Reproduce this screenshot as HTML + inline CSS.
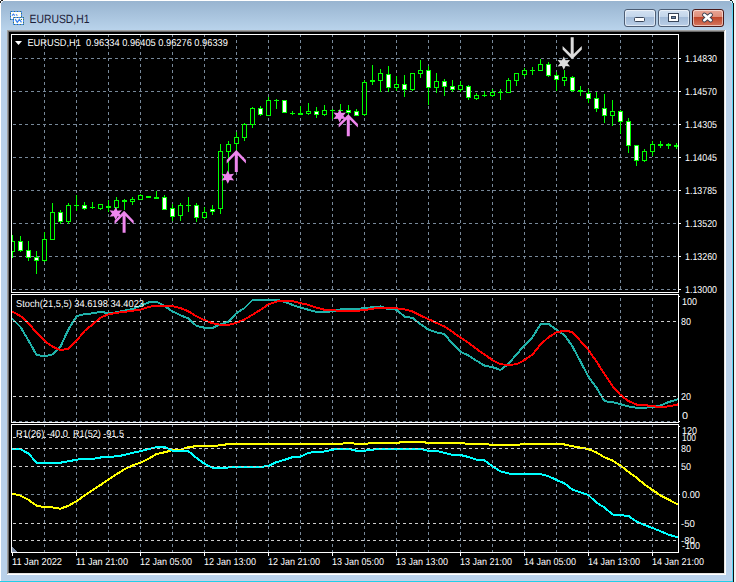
<!DOCTYPE html><html><head><meta charset="utf-8"><style>
html,body{margin:0;padding:0;width:736px;height:582px;overflow:hidden;background:#fff}
svg{position:absolute;left:0;top:0;display:block}
text{font-family:"Liberation Sans",sans-serif;text-rendering:geometricPrecision}
</style></head><body>
<svg width="736" height="582" viewBox="0 0 736 582">
<defs>
<linearGradient id="tg" x1="0" y1="0" x2="0" y2="1"><stop offset="0" stop-color="#98b4d0"/><stop offset="1" stop-color="#bad4ec"/></linearGradient>
<linearGradient id="bb" x1="0" y1="0" x2="0" y2="1"><stop offset="0" stop-color="#d4e2f2"/><stop offset="0.44" stop-color="#c2d5ea"/><stop offset="0.46" stop-color="#a2bbd8"/><stop offset="1" stop-color="#bcd0e8"/></linearGradient>
<linearGradient id="cb" x1="0" y1="0" x2="0" y2="1"><stop offset="0" stop-color="#eaa898"/><stop offset="0.44" stop-color="#de8e7a"/><stop offset="0.46" stop-color="#c0462a"/><stop offset="1" stop-color="#d67a62"/></linearGradient>
<clipPath id="cp1"><rect x="12" y="35" width="666" height="257"/></clipPath>
<clipPath id="cp2"><rect x="12" y="295" width="666" height="127"/></clipPath>
<clipPath id="cp3"><rect x="12" y="425" width="666" height="127"/></clipPath>
</defs>
<g shape-rendering="crispEdges">
<rect x="0" y="0" width="736" height="582" fill="#ffffff"/>
<rect x="1" y="1" width="732" height="581" fill="#b9d1ea"/>
<rect x="1" y="1" width="732" height="30" fill="url(#tg)"/>
<rect x="732" y="3" width="1" height="579" fill="#58d6f6"/>
<rect x="733" y="3" width="1" height="579" fill="#101010"/>
<rect x="734" y="0" width="2" height="582" fill="#f2f2f2"/>
<rect x="730" y="0" width="2" height="1" fill="#101818"/>
<rect x="732" y="1" width="1" height="2" fill="#184848"/>
<rect x="730" y="1" width="2" height="1" fill="#c8f2fa"/>
<rect x="731" y="2" width="1" height="1" fill="#c8f2fa"/>
<rect x="1" y="0" width="2" height="1" fill="#202020"/>
<rect x="0" y="1" width="1" height="2" fill="#202020"/>
<rect x="1" y="1" width="2" height="1" fill="#e4e8ee"/>
<rect x="1" y="2" width="1" height="1" fill="#e4e8ee"/>
<rect x="0" y="581" width="733" height="1" fill="#22cee8"/>
<rect x="731" y="28" width="1" height="553" fill="#c4d0ea"/>
<rect x="1" y="580" width="731" height="1" fill="#c4cfe8"/>
<rect x="7" y="30" width="719" height="545" fill="#ffffff"/>
<rect x="7" y="30" width="718" height="544" fill="#a0a0a0"/>
<rect x="8" y="31" width="717" height="543" fill="#e3e3e3"/>
<rect x="8" y="31" width="716" height="542" fill="#696969"/>
<rect x="9" y="32" width="715" height="541" fill="#000000"/>
</g>
<rect x="624.5" y="9.5" width="31" height="17" rx="2.5" ry="2.5" fill="url(#bb)" stroke="#4c5d74" stroke-width="1"/>
<rect x="625.5" y="10.5" width="29" height="15" rx="2" ry="2" fill="none" stroke="rgba(255,255,255,0.55)" stroke-width="1"/>
<rect x="658.5" y="9.5" width="31" height="17" rx="2.5" ry="2.5" fill="url(#bb)" stroke="#4c5d74" stroke-width="1"/>
<rect x="659.5" y="10.5" width="29" height="15" rx="2" ry="2" fill="none" stroke="rgba(255,255,255,0.55)" stroke-width="1"/>
<rect x="692.5" y="9.5" width="31" height="17" rx="2.5" ry="2.5" fill="url(#cb)" stroke="#4a1a1a" stroke-width="1"/>
<rect x="693.5" y="10.5" width="29" height="15" rx="2" ry="2" fill="none" stroke="rgba(255,255,255,0.55)" stroke-width="1"/>
<rect x="634.5" y="17.5" width="10" height="4" rx="1" fill="#ffffff" stroke="#39465a" stroke-width="1"/>
<rect x="668.5" y="13.5" width="10" height="8" fill="none" stroke="#39465a" stroke-width="1"/>
<rect x="670" y="15" width="7" height="5" fill="none" stroke="#ffffff" stroke-width="2"/>
<rect x="671.5" y="16.5" width="4" height="2" fill="#6b86a8" stroke="#39465a" stroke-width="1"/>
<path d="M704.3 14.8 L710.7 20.2 M710.7 14.8 L704.3 20.2" stroke="#3a4050" stroke-width="4.4" stroke-linecap="round"/>
<path d="M704.3 14.8 L710.7 20.2 M710.7 14.8 L704.3 20.2" stroke="#ffffff" stroke-width="2.6" stroke-linecap="round"/>
<g shape-rendering="crispEdges">
<rect x="10" y="11" width="12" height="9" fill="#4a8cf2"/>
<rect x="11" y="12" width="10" height="7" fill="#fffef6"/>
<rect x="13" y="17" width="11" height="8" fill="#4a8cf2"/>
<rect x="14" y="18" width="9" height="6" fill="#fffef6"/>
<path fill="#3f7a60" d="M11 11h1v1h-1zM14 11h1v1h-1zM17 11h1v1h-1zM20 11h1v1h-1zM14 17h1v1h-1z M14 24h1v1h-1zM17 17h1v1h-1z M17 24h1v1h-1zM20 17h1v1h-1z M20 24h1v1h-1zM23 17h1v1h-1z M23 24h1v1h-1zM10 13h1v1h-1z M21 13h1v1h-1zM10 16h1v1h-1z M21 16h1v1h-1zM10 19h1v1h-1z M21 19h1v1h-1zM13 19h1v1h-1z M23 19h1v1h-1zM13 22h1v1h-1z M23 22h1v1h-1z"/>
</g>
<path d="M15.2 19.2 L17.3 22.4 L19.4 19.3 L21.5 22.4" fill="none" stroke="#3c82f0" stroke-width="1.2"/>
<path d="M12 15.6 L13.4 14.2 L14.8 15.6 M16 14.4 L17.4 15.6" fill="none" stroke="#3c82f0" stroke-width="1.2"/>
<text x="29.5" y="22.8" font-size="12" fill="#1c2038" textLength="60" lengthAdjust="spacingAndGlyphs">EURUSD,H1</text>
<g shape-rendering="crispEdges" fill="#ffffff">
<rect x="11" y="34" width="668" height="1"/>
<rect x="11" y="292" width="668" height="1"/>
<rect x="11" y="34" width="1" height="259"/>
<rect x="678" y="34" width="1" height="259"/>
<rect x="11" y="294" width="668" height="1"/>
<rect x="11" y="422" width="668" height="1"/>
<rect x="11" y="294" width="1" height="129"/>
<rect x="678" y="294" width="1" height="129"/>
<rect x="11" y="424" width="668" height="1"/>
<rect x="11" y="552" width="668" height="1"/>
<rect x="11" y="424" width="1" height="129"/>
<rect x="678" y="424" width="1" height="129"/>
</g>
<path shape-rendering="crispEdges" fill="#778899" d="M13 58h3v1h-3zM19 58h3v1h-3zM25 58h3v1h-3zM31 58h3v1h-3zM37 58h3v1h-3zM43 58h3v1h-3zM49 58h3v1h-3zM55 58h3v1h-3zM61 58h3v1h-3zM67 58h3v1h-3zM73 58h3v1h-3zM79 58h3v1h-3zM85 58h3v1h-3zM91 58h3v1h-3zM97 58h3v1h-3zM103 58h3v1h-3zM109 58h3v1h-3zM115 58h3v1h-3zM121 58h3v1h-3zM127 58h3v1h-3zM133 58h3v1h-3zM139 58h3v1h-3zM145 58h3v1h-3zM151 58h3v1h-3zM157 58h3v1h-3zM163 58h3v1h-3zM169 58h3v1h-3zM175 58h3v1h-3zM181 58h3v1h-3zM187 58h3v1h-3zM193 58h3v1h-3zM199 58h3v1h-3zM205 58h3v1h-3zM211 58h3v1h-3zM217 58h3v1h-3zM223 58h3v1h-3zM229 58h3v1h-3zM235 58h3v1h-3zM241 58h3v1h-3zM247 58h3v1h-3zM253 58h3v1h-3zM259 58h3v1h-3zM265 58h3v1h-3zM271 58h3v1h-3zM277 58h3v1h-3zM283 58h3v1h-3zM289 58h3v1h-3zM295 58h3v1h-3zM301 58h3v1h-3zM307 58h3v1h-3zM313 58h3v1h-3zM319 58h3v1h-3zM325 58h3v1h-3zM331 58h3v1h-3zM337 58h3v1h-3zM343 58h3v1h-3zM349 58h3v1h-3zM355 58h3v1h-3zM361 58h3v1h-3zM367 58h3v1h-3zM373 58h3v1h-3zM379 58h3v1h-3zM385 58h3v1h-3zM391 58h3v1h-3zM397 58h3v1h-3zM403 58h3v1h-3zM409 58h3v1h-3zM415 58h3v1h-3zM421 58h3v1h-3zM427 58h3v1h-3zM433 58h3v1h-3zM439 58h3v1h-3zM445 58h3v1h-3zM451 58h3v1h-3zM457 58h3v1h-3zM463 58h3v1h-3zM469 58h3v1h-3zM475 58h3v1h-3zM481 58h3v1h-3zM487 58h3v1h-3zM493 58h3v1h-3zM499 58h3v1h-3zM505 58h3v1h-3zM511 58h3v1h-3zM517 58h3v1h-3zM523 58h3v1h-3zM529 58h3v1h-3zM535 58h3v1h-3zM541 58h3v1h-3zM547 58h3v1h-3zM553 58h3v1h-3zM559 58h3v1h-3zM565 58h3v1h-3zM571 58h3v1h-3zM577 58h3v1h-3zM583 58h3v1h-3zM589 58h3v1h-3zM595 58h3v1h-3zM601 58h3v1h-3zM607 58h3v1h-3zM613 58h3v1h-3zM619 58h3v1h-3zM625 58h3v1h-3zM631 58h3v1h-3zM637 58h3v1h-3zM643 58h3v1h-3zM649 58h3v1h-3zM655 58h3v1h-3zM661 58h3v1h-3zM667 58h3v1h-3zM673 58h3v1h-3zM13 91h3v1h-3zM19 91h3v1h-3zM25 91h3v1h-3zM31 91h3v1h-3zM37 91h3v1h-3zM43 91h3v1h-3zM49 91h3v1h-3zM55 91h3v1h-3zM61 91h3v1h-3zM67 91h3v1h-3zM73 91h3v1h-3zM79 91h3v1h-3zM85 91h3v1h-3zM91 91h3v1h-3zM97 91h3v1h-3zM103 91h3v1h-3zM109 91h3v1h-3zM115 91h3v1h-3zM121 91h3v1h-3zM127 91h3v1h-3zM133 91h3v1h-3zM139 91h3v1h-3zM145 91h3v1h-3zM151 91h3v1h-3zM157 91h3v1h-3zM163 91h3v1h-3zM169 91h3v1h-3zM175 91h3v1h-3zM181 91h3v1h-3zM187 91h3v1h-3zM193 91h3v1h-3zM199 91h3v1h-3zM205 91h3v1h-3zM211 91h3v1h-3zM217 91h3v1h-3zM223 91h3v1h-3zM229 91h3v1h-3zM235 91h3v1h-3zM241 91h3v1h-3zM247 91h3v1h-3zM253 91h3v1h-3zM259 91h3v1h-3zM265 91h3v1h-3zM271 91h3v1h-3zM277 91h3v1h-3zM283 91h3v1h-3zM289 91h3v1h-3zM295 91h3v1h-3zM301 91h3v1h-3zM307 91h3v1h-3zM313 91h3v1h-3zM319 91h3v1h-3zM325 91h3v1h-3zM331 91h3v1h-3zM337 91h3v1h-3zM343 91h3v1h-3zM349 91h3v1h-3zM355 91h3v1h-3zM361 91h3v1h-3zM367 91h3v1h-3zM373 91h3v1h-3zM379 91h3v1h-3zM385 91h3v1h-3zM391 91h3v1h-3zM397 91h3v1h-3zM403 91h3v1h-3zM409 91h3v1h-3zM415 91h3v1h-3zM421 91h3v1h-3zM427 91h3v1h-3zM433 91h3v1h-3zM439 91h3v1h-3zM445 91h3v1h-3zM451 91h3v1h-3zM457 91h3v1h-3zM463 91h3v1h-3zM469 91h3v1h-3zM475 91h3v1h-3zM481 91h3v1h-3zM487 91h3v1h-3zM493 91h3v1h-3zM499 91h3v1h-3zM505 91h3v1h-3zM511 91h3v1h-3zM517 91h3v1h-3zM523 91h3v1h-3zM529 91h3v1h-3zM535 91h3v1h-3zM541 91h3v1h-3zM547 91h3v1h-3zM553 91h3v1h-3zM559 91h3v1h-3zM565 91h3v1h-3zM571 91h3v1h-3zM577 91h3v1h-3zM583 91h3v1h-3zM589 91h3v1h-3zM595 91h3v1h-3zM601 91h3v1h-3zM607 91h3v1h-3zM613 91h3v1h-3zM619 91h3v1h-3zM625 91h3v1h-3zM631 91h3v1h-3zM637 91h3v1h-3zM643 91h3v1h-3zM649 91h3v1h-3zM655 91h3v1h-3zM661 91h3v1h-3zM667 91h3v1h-3zM673 91h3v1h-3zM13 124h3v1h-3zM19 124h3v1h-3zM25 124h3v1h-3zM31 124h3v1h-3zM37 124h3v1h-3zM43 124h3v1h-3zM49 124h3v1h-3zM55 124h3v1h-3zM61 124h3v1h-3zM67 124h3v1h-3zM73 124h3v1h-3zM79 124h3v1h-3zM85 124h3v1h-3zM91 124h3v1h-3zM97 124h3v1h-3zM103 124h3v1h-3zM109 124h3v1h-3zM115 124h3v1h-3zM121 124h3v1h-3zM127 124h3v1h-3zM133 124h3v1h-3zM139 124h3v1h-3zM145 124h3v1h-3zM151 124h3v1h-3zM157 124h3v1h-3zM163 124h3v1h-3zM169 124h3v1h-3zM175 124h3v1h-3zM181 124h3v1h-3zM187 124h3v1h-3zM193 124h3v1h-3zM199 124h3v1h-3zM205 124h3v1h-3zM211 124h3v1h-3zM217 124h3v1h-3zM223 124h3v1h-3zM229 124h3v1h-3zM235 124h3v1h-3zM241 124h3v1h-3zM247 124h3v1h-3zM253 124h3v1h-3zM259 124h3v1h-3zM265 124h3v1h-3zM271 124h3v1h-3zM277 124h3v1h-3zM283 124h3v1h-3zM289 124h3v1h-3zM295 124h3v1h-3zM301 124h3v1h-3zM307 124h3v1h-3zM313 124h3v1h-3zM319 124h3v1h-3zM325 124h3v1h-3zM331 124h3v1h-3zM337 124h3v1h-3zM343 124h3v1h-3zM349 124h3v1h-3zM355 124h3v1h-3zM361 124h3v1h-3zM367 124h3v1h-3zM373 124h3v1h-3zM379 124h3v1h-3zM385 124h3v1h-3zM391 124h3v1h-3zM397 124h3v1h-3zM403 124h3v1h-3zM409 124h3v1h-3zM415 124h3v1h-3zM421 124h3v1h-3zM427 124h3v1h-3zM433 124h3v1h-3zM439 124h3v1h-3zM445 124h3v1h-3zM451 124h3v1h-3zM457 124h3v1h-3zM463 124h3v1h-3zM469 124h3v1h-3zM475 124h3v1h-3zM481 124h3v1h-3zM487 124h3v1h-3zM493 124h3v1h-3zM499 124h3v1h-3zM505 124h3v1h-3zM511 124h3v1h-3zM517 124h3v1h-3zM523 124h3v1h-3zM529 124h3v1h-3zM535 124h3v1h-3zM541 124h3v1h-3zM547 124h3v1h-3zM553 124h3v1h-3zM559 124h3v1h-3zM565 124h3v1h-3zM571 124h3v1h-3zM577 124h3v1h-3zM583 124h3v1h-3zM589 124h3v1h-3zM595 124h3v1h-3zM601 124h3v1h-3zM607 124h3v1h-3zM613 124h3v1h-3zM619 124h3v1h-3zM625 124h3v1h-3zM631 124h3v1h-3zM637 124h3v1h-3zM643 124h3v1h-3zM649 124h3v1h-3zM655 124h3v1h-3zM661 124h3v1h-3zM667 124h3v1h-3zM673 124h3v1h-3zM13 157h3v1h-3zM19 157h3v1h-3zM25 157h3v1h-3zM31 157h3v1h-3zM37 157h3v1h-3zM43 157h3v1h-3zM49 157h3v1h-3zM55 157h3v1h-3zM61 157h3v1h-3zM67 157h3v1h-3zM73 157h3v1h-3zM79 157h3v1h-3zM85 157h3v1h-3zM91 157h3v1h-3zM97 157h3v1h-3zM103 157h3v1h-3zM109 157h3v1h-3zM115 157h3v1h-3zM121 157h3v1h-3zM127 157h3v1h-3zM133 157h3v1h-3zM139 157h3v1h-3zM145 157h3v1h-3zM151 157h3v1h-3zM157 157h3v1h-3zM163 157h3v1h-3zM169 157h3v1h-3zM175 157h3v1h-3zM181 157h3v1h-3zM187 157h3v1h-3zM193 157h3v1h-3zM199 157h3v1h-3zM205 157h3v1h-3zM211 157h3v1h-3zM217 157h3v1h-3zM223 157h3v1h-3zM229 157h3v1h-3zM235 157h3v1h-3zM241 157h3v1h-3zM247 157h3v1h-3zM253 157h3v1h-3zM259 157h3v1h-3zM265 157h3v1h-3zM271 157h3v1h-3zM277 157h3v1h-3zM283 157h3v1h-3zM289 157h3v1h-3zM295 157h3v1h-3zM301 157h3v1h-3zM307 157h3v1h-3zM313 157h3v1h-3zM319 157h3v1h-3zM325 157h3v1h-3zM331 157h3v1h-3zM337 157h3v1h-3zM343 157h3v1h-3zM349 157h3v1h-3zM355 157h3v1h-3zM361 157h3v1h-3zM367 157h3v1h-3zM373 157h3v1h-3zM379 157h3v1h-3zM385 157h3v1h-3zM391 157h3v1h-3zM397 157h3v1h-3zM403 157h3v1h-3zM409 157h3v1h-3zM415 157h3v1h-3zM421 157h3v1h-3zM427 157h3v1h-3zM433 157h3v1h-3zM439 157h3v1h-3zM445 157h3v1h-3zM451 157h3v1h-3zM457 157h3v1h-3zM463 157h3v1h-3zM469 157h3v1h-3zM475 157h3v1h-3zM481 157h3v1h-3zM487 157h3v1h-3zM493 157h3v1h-3zM499 157h3v1h-3zM505 157h3v1h-3zM511 157h3v1h-3zM517 157h3v1h-3zM523 157h3v1h-3zM529 157h3v1h-3zM535 157h3v1h-3zM541 157h3v1h-3zM547 157h3v1h-3zM553 157h3v1h-3zM559 157h3v1h-3zM565 157h3v1h-3zM571 157h3v1h-3zM577 157h3v1h-3zM583 157h3v1h-3zM589 157h3v1h-3zM595 157h3v1h-3zM601 157h3v1h-3zM607 157h3v1h-3zM613 157h3v1h-3zM619 157h3v1h-3zM625 157h3v1h-3zM631 157h3v1h-3zM637 157h3v1h-3zM643 157h3v1h-3zM649 157h3v1h-3zM655 157h3v1h-3zM661 157h3v1h-3zM667 157h3v1h-3zM673 157h3v1h-3zM13 190h3v1h-3zM19 190h3v1h-3zM25 190h3v1h-3zM31 190h3v1h-3zM37 190h3v1h-3zM43 190h3v1h-3zM49 190h3v1h-3zM55 190h3v1h-3zM61 190h3v1h-3zM67 190h3v1h-3zM73 190h3v1h-3zM79 190h3v1h-3zM85 190h3v1h-3zM91 190h3v1h-3zM97 190h3v1h-3zM103 190h3v1h-3zM109 190h3v1h-3zM115 190h3v1h-3zM121 190h3v1h-3zM127 190h3v1h-3zM133 190h3v1h-3zM139 190h3v1h-3zM145 190h3v1h-3zM151 190h3v1h-3zM157 190h3v1h-3zM163 190h3v1h-3zM169 190h3v1h-3zM175 190h3v1h-3zM181 190h3v1h-3zM187 190h3v1h-3zM193 190h3v1h-3zM199 190h3v1h-3zM205 190h3v1h-3zM211 190h3v1h-3zM217 190h3v1h-3zM223 190h3v1h-3zM229 190h3v1h-3zM235 190h3v1h-3zM241 190h3v1h-3zM247 190h3v1h-3zM253 190h3v1h-3zM259 190h3v1h-3zM265 190h3v1h-3zM271 190h3v1h-3zM277 190h3v1h-3zM283 190h3v1h-3zM289 190h3v1h-3zM295 190h3v1h-3zM301 190h3v1h-3zM307 190h3v1h-3zM313 190h3v1h-3zM319 190h3v1h-3zM325 190h3v1h-3zM331 190h3v1h-3zM337 190h3v1h-3zM343 190h3v1h-3zM349 190h3v1h-3zM355 190h3v1h-3zM361 190h3v1h-3zM367 190h3v1h-3zM373 190h3v1h-3zM379 190h3v1h-3zM385 190h3v1h-3zM391 190h3v1h-3zM397 190h3v1h-3zM403 190h3v1h-3zM409 190h3v1h-3zM415 190h3v1h-3zM421 190h3v1h-3zM427 190h3v1h-3zM433 190h3v1h-3zM439 190h3v1h-3zM445 190h3v1h-3zM451 190h3v1h-3zM457 190h3v1h-3zM463 190h3v1h-3zM469 190h3v1h-3zM475 190h3v1h-3zM481 190h3v1h-3zM487 190h3v1h-3zM493 190h3v1h-3zM499 190h3v1h-3zM505 190h3v1h-3zM511 190h3v1h-3zM517 190h3v1h-3zM523 190h3v1h-3zM529 190h3v1h-3zM535 190h3v1h-3zM541 190h3v1h-3zM547 190h3v1h-3zM553 190h3v1h-3zM559 190h3v1h-3zM565 190h3v1h-3zM571 190h3v1h-3zM577 190h3v1h-3zM583 190h3v1h-3zM589 190h3v1h-3zM595 190h3v1h-3zM601 190h3v1h-3zM607 190h3v1h-3zM613 190h3v1h-3zM619 190h3v1h-3zM625 190h3v1h-3zM631 190h3v1h-3zM637 190h3v1h-3zM643 190h3v1h-3zM649 190h3v1h-3zM655 190h3v1h-3zM661 190h3v1h-3zM667 190h3v1h-3zM673 190h3v1h-3zM13 223h3v1h-3zM19 223h3v1h-3zM25 223h3v1h-3zM31 223h3v1h-3zM37 223h3v1h-3zM43 223h3v1h-3zM49 223h3v1h-3zM55 223h3v1h-3zM61 223h3v1h-3zM67 223h3v1h-3zM73 223h3v1h-3zM79 223h3v1h-3zM85 223h3v1h-3zM91 223h3v1h-3zM97 223h3v1h-3zM103 223h3v1h-3zM109 223h3v1h-3zM115 223h3v1h-3zM121 223h3v1h-3zM127 223h3v1h-3zM133 223h3v1h-3zM139 223h3v1h-3zM145 223h3v1h-3zM151 223h3v1h-3zM157 223h3v1h-3zM163 223h3v1h-3zM169 223h3v1h-3zM175 223h3v1h-3zM181 223h3v1h-3zM187 223h3v1h-3zM193 223h3v1h-3zM199 223h3v1h-3zM205 223h3v1h-3zM211 223h3v1h-3zM217 223h3v1h-3zM223 223h3v1h-3zM229 223h3v1h-3zM235 223h3v1h-3zM241 223h3v1h-3zM247 223h3v1h-3zM253 223h3v1h-3zM259 223h3v1h-3zM265 223h3v1h-3zM271 223h3v1h-3zM277 223h3v1h-3zM283 223h3v1h-3zM289 223h3v1h-3zM295 223h3v1h-3zM301 223h3v1h-3zM307 223h3v1h-3zM313 223h3v1h-3zM319 223h3v1h-3zM325 223h3v1h-3zM331 223h3v1h-3zM337 223h3v1h-3zM343 223h3v1h-3zM349 223h3v1h-3zM355 223h3v1h-3zM361 223h3v1h-3zM367 223h3v1h-3zM373 223h3v1h-3zM379 223h3v1h-3zM385 223h3v1h-3zM391 223h3v1h-3zM397 223h3v1h-3zM403 223h3v1h-3zM409 223h3v1h-3zM415 223h3v1h-3zM421 223h3v1h-3zM427 223h3v1h-3zM433 223h3v1h-3zM439 223h3v1h-3zM445 223h3v1h-3zM451 223h3v1h-3zM457 223h3v1h-3zM463 223h3v1h-3zM469 223h3v1h-3zM475 223h3v1h-3zM481 223h3v1h-3zM487 223h3v1h-3zM493 223h3v1h-3zM499 223h3v1h-3zM505 223h3v1h-3zM511 223h3v1h-3zM517 223h3v1h-3zM523 223h3v1h-3zM529 223h3v1h-3zM535 223h3v1h-3zM541 223h3v1h-3zM547 223h3v1h-3zM553 223h3v1h-3zM559 223h3v1h-3zM565 223h3v1h-3zM571 223h3v1h-3zM577 223h3v1h-3zM583 223h3v1h-3zM589 223h3v1h-3zM595 223h3v1h-3zM601 223h3v1h-3zM607 223h3v1h-3zM613 223h3v1h-3zM619 223h3v1h-3zM625 223h3v1h-3zM631 223h3v1h-3zM637 223h3v1h-3zM643 223h3v1h-3zM649 223h3v1h-3zM655 223h3v1h-3zM661 223h3v1h-3zM667 223h3v1h-3zM673 223h3v1h-3zM13 256h3v1h-3zM19 256h3v1h-3zM25 256h3v1h-3zM31 256h3v1h-3zM37 256h3v1h-3zM43 256h3v1h-3zM49 256h3v1h-3zM55 256h3v1h-3zM61 256h3v1h-3zM67 256h3v1h-3zM73 256h3v1h-3zM79 256h3v1h-3zM85 256h3v1h-3zM91 256h3v1h-3zM97 256h3v1h-3zM103 256h3v1h-3zM109 256h3v1h-3zM115 256h3v1h-3zM121 256h3v1h-3zM127 256h3v1h-3zM133 256h3v1h-3zM139 256h3v1h-3zM145 256h3v1h-3zM151 256h3v1h-3zM157 256h3v1h-3zM163 256h3v1h-3zM169 256h3v1h-3zM175 256h3v1h-3zM181 256h3v1h-3zM187 256h3v1h-3zM193 256h3v1h-3zM199 256h3v1h-3zM205 256h3v1h-3zM211 256h3v1h-3zM217 256h3v1h-3zM223 256h3v1h-3zM229 256h3v1h-3zM235 256h3v1h-3zM241 256h3v1h-3zM247 256h3v1h-3zM253 256h3v1h-3zM259 256h3v1h-3zM265 256h3v1h-3zM271 256h3v1h-3zM277 256h3v1h-3zM283 256h3v1h-3zM289 256h3v1h-3zM295 256h3v1h-3zM301 256h3v1h-3zM307 256h3v1h-3zM313 256h3v1h-3zM319 256h3v1h-3zM325 256h3v1h-3zM331 256h3v1h-3zM337 256h3v1h-3zM343 256h3v1h-3zM349 256h3v1h-3zM355 256h3v1h-3zM361 256h3v1h-3zM367 256h3v1h-3zM373 256h3v1h-3zM379 256h3v1h-3zM385 256h3v1h-3zM391 256h3v1h-3zM397 256h3v1h-3zM403 256h3v1h-3zM409 256h3v1h-3zM415 256h3v1h-3zM421 256h3v1h-3zM427 256h3v1h-3zM433 256h3v1h-3zM439 256h3v1h-3zM445 256h3v1h-3zM451 256h3v1h-3zM457 256h3v1h-3zM463 256h3v1h-3zM469 256h3v1h-3zM475 256h3v1h-3zM481 256h3v1h-3zM487 256h3v1h-3zM493 256h3v1h-3zM499 256h3v1h-3zM505 256h3v1h-3zM511 256h3v1h-3zM517 256h3v1h-3zM523 256h3v1h-3zM529 256h3v1h-3zM535 256h3v1h-3zM541 256h3v1h-3zM547 256h3v1h-3zM553 256h3v1h-3zM559 256h3v1h-3zM565 256h3v1h-3zM571 256h3v1h-3zM577 256h3v1h-3zM583 256h3v1h-3zM589 256h3v1h-3zM595 256h3v1h-3zM601 256h3v1h-3zM607 256h3v1h-3zM613 256h3v1h-3zM619 256h3v1h-3zM625 256h3v1h-3zM631 256h3v1h-3zM637 256h3v1h-3zM643 256h3v1h-3zM649 256h3v1h-3zM655 256h3v1h-3zM661 256h3v1h-3zM667 256h3v1h-3zM673 256h3v1h-3zM13 289h3v1h-3zM19 289h3v1h-3zM25 289h3v1h-3zM31 289h3v1h-3zM37 289h3v1h-3zM43 289h3v1h-3zM49 289h3v1h-3zM55 289h3v1h-3zM61 289h3v1h-3zM67 289h3v1h-3zM73 289h3v1h-3zM79 289h3v1h-3zM85 289h3v1h-3zM91 289h3v1h-3zM97 289h3v1h-3zM103 289h3v1h-3zM109 289h3v1h-3zM115 289h3v1h-3zM121 289h3v1h-3zM127 289h3v1h-3zM133 289h3v1h-3zM139 289h3v1h-3zM145 289h3v1h-3zM151 289h3v1h-3zM157 289h3v1h-3zM163 289h3v1h-3zM169 289h3v1h-3zM175 289h3v1h-3zM181 289h3v1h-3zM187 289h3v1h-3zM193 289h3v1h-3zM199 289h3v1h-3zM205 289h3v1h-3zM211 289h3v1h-3zM217 289h3v1h-3zM223 289h3v1h-3zM229 289h3v1h-3zM235 289h3v1h-3zM241 289h3v1h-3zM247 289h3v1h-3zM253 289h3v1h-3zM259 289h3v1h-3zM265 289h3v1h-3zM271 289h3v1h-3zM277 289h3v1h-3zM283 289h3v1h-3zM289 289h3v1h-3zM295 289h3v1h-3zM301 289h3v1h-3zM307 289h3v1h-3zM313 289h3v1h-3zM319 289h3v1h-3zM325 289h3v1h-3zM331 289h3v1h-3zM337 289h3v1h-3zM343 289h3v1h-3zM349 289h3v1h-3zM355 289h3v1h-3zM361 289h3v1h-3zM367 289h3v1h-3zM373 289h3v1h-3zM379 289h3v1h-3zM385 289h3v1h-3zM391 289h3v1h-3zM397 289h3v1h-3zM403 289h3v1h-3zM409 289h3v1h-3zM415 289h3v1h-3zM421 289h3v1h-3zM427 289h3v1h-3zM433 289h3v1h-3zM439 289h3v1h-3zM445 289h3v1h-3zM451 289h3v1h-3zM457 289h3v1h-3zM463 289h3v1h-3zM469 289h3v1h-3zM475 289h3v1h-3zM481 289h3v1h-3zM487 289h3v1h-3zM493 289h3v1h-3zM499 289h3v1h-3zM505 289h3v1h-3zM511 289h3v1h-3zM517 289h3v1h-3zM523 289h3v1h-3zM529 289h3v1h-3zM535 289h3v1h-3zM541 289h3v1h-3zM547 289h3v1h-3zM553 289h3v1h-3zM559 289h3v1h-3zM565 289h3v1h-3zM571 289h3v1h-3zM577 289h3v1h-3zM583 289h3v1h-3zM589 289h3v1h-3zM595 289h3v1h-3zM601 289h3v1h-3zM607 289h3v1h-3zM613 289h3v1h-3zM619 289h3v1h-3zM625 289h3v1h-3zM631 289h3v1h-3zM637 289h3v1h-3zM643 289h3v1h-3zM649 289h3v1h-3zM655 289h3v1h-3zM661 289h3v1h-3zM667 289h3v1h-3zM673 289h3v1h-3zM44 40h1v3h-1zM44 46h1v3h-1zM44 52h1v3h-1zM44 58h1v3h-1zM44 64h1v3h-1zM44 70h1v3h-1zM44 76h1v3h-1zM44 82h1v3h-1zM44 88h1v3h-1zM44 94h1v3h-1zM44 100h1v3h-1zM44 106h1v3h-1zM44 112h1v3h-1zM44 118h1v3h-1zM44 124h1v3h-1zM44 130h1v3h-1zM44 136h1v3h-1zM44 142h1v3h-1zM44 148h1v3h-1zM44 154h1v3h-1zM44 160h1v3h-1zM44 166h1v3h-1zM44 172h1v3h-1zM44 178h1v3h-1zM44 184h1v3h-1zM44 190h1v3h-1zM44 196h1v3h-1zM44 202h1v3h-1zM44 208h1v3h-1zM44 214h1v3h-1zM44 220h1v3h-1zM44 226h1v3h-1zM44 232h1v3h-1zM44 238h1v3h-1zM44 244h1v3h-1zM44 250h1v3h-1zM44 256h1v3h-1zM44 262h1v3h-1zM44 268h1v3h-1zM44 274h1v3h-1zM44 280h1v3h-1zM44 286h1v3h-1zM44 35h1v2h-1zM76 40h1v3h-1zM76 46h1v3h-1zM76 52h1v3h-1zM76 58h1v3h-1zM76 64h1v3h-1zM76 70h1v3h-1zM76 76h1v3h-1zM76 82h1v3h-1zM76 88h1v3h-1zM76 94h1v3h-1zM76 100h1v3h-1zM76 106h1v3h-1zM76 112h1v3h-1zM76 118h1v3h-1zM76 124h1v3h-1zM76 130h1v3h-1zM76 136h1v3h-1zM76 142h1v3h-1zM76 148h1v3h-1zM76 154h1v3h-1zM76 160h1v3h-1zM76 166h1v3h-1zM76 172h1v3h-1zM76 178h1v3h-1zM76 184h1v3h-1zM76 190h1v3h-1zM76 196h1v3h-1zM76 202h1v3h-1zM76 208h1v3h-1zM76 214h1v3h-1zM76 220h1v3h-1zM76 226h1v3h-1zM76 232h1v3h-1zM76 238h1v3h-1zM76 244h1v3h-1zM76 250h1v3h-1zM76 256h1v3h-1zM76 262h1v3h-1zM76 268h1v3h-1zM76 274h1v3h-1zM76 280h1v3h-1zM76 286h1v3h-1zM76 35h1v2h-1zM108 40h1v3h-1zM108 46h1v3h-1zM108 52h1v3h-1zM108 58h1v3h-1zM108 64h1v3h-1zM108 70h1v3h-1zM108 76h1v3h-1zM108 82h1v3h-1zM108 88h1v3h-1zM108 94h1v3h-1zM108 100h1v3h-1zM108 106h1v3h-1zM108 112h1v3h-1zM108 118h1v3h-1zM108 124h1v3h-1zM108 130h1v3h-1zM108 136h1v3h-1zM108 142h1v3h-1zM108 148h1v3h-1zM108 154h1v3h-1zM108 160h1v3h-1zM108 166h1v3h-1zM108 172h1v3h-1zM108 178h1v3h-1zM108 184h1v3h-1zM108 190h1v3h-1zM108 196h1v3h-1zM108 202h1v3h-1zM108 208h1v3h-1zM108 214h1v3h-1zM108 220h1v3h-1zM108 226h1v3h-1zM108 232h1v3h-1zM108 238h1v3h-1zM108 244h1v3h-1zM108 250h1v3h-1zM108 256h1v3h-1zM108 262h1v3h-1zM108 268h1v3h-1zM108 274h1v3h-1zM108 280h1v3h-1zM108 286h1v3h-1zM108 35h1v2h-1zM140 40h1v3h-1zM140 46h1v3h-1zM140 52h1v3h-1zM140 58h1v3h-1zM140 64h1v3h-1zM140 70h1v3h-1zM140 76h1v3h-1zM140 82h1v3h-1zM140 88h1v3h-1zM140 94h1v3h-1zM140 100h1v3h-1zM140 106h1v3h-1zM140 112h1v3h-1zM140 118h1v3h-1zM140 124h1v3h-1zM140 130h1v3h-1zM140 136h1v3h-1zM140 142h1v3h-1zM140 148h1v3h-1zM140 154h1v3h-1zM140 160h1v3h-1zM140 166h1v3h-1zM140 172h1v3h-1zM140 178h1v3h-1zM140 184h1v3h-1zM140 190h1v3h-1zM140 196h1v3h-1zM140 202h1v3h-1zM140 208h1v3h-1zM140 214h1v3h-1zM140 220h1v3h-1zM140 226h1v3h-1zM140 232h1v3h-1zM140 238h1v3h-1zM140 244h1v3h-1zM140 250h1v3h-1zM140 256h1v3h-1zM140 262h1v3h-1zM140 268h1v3h-1zM140 274h1v3h-1zM140 280h1v3h-1zM140 286h1v3h-1zM140 35h1v2h-1zM172 40h1v3h-1zM172 46h1v3h-1zM172 52h1v3h-1zM172 58h1v3h-1zM172 64h1v3h-1zM172 70h1v3h-1zM172 76h1v3h-1zM172 82h1v3h-1zM172 88h1v3h-1zM172 94h1v3h-1zM172 100h1v3h-1zM172 106h1v3h-1zM172 112h1v3h-1zM172 118h1v3h-1zM172 124h1v3h-1zM172 130h1v3h-1zM172 136h1v3h-1zM172 142h1v3h-1zM172 148h1v3h-1zM172 154h1v3h-1zM172 160h1v3h-1zM172 166h1v3h-1zM172 172h1v3h-1zM172 178h1v3h-1zM172 184h1v3h-1zM172 190h1v3h-1zM172 196h1v3h-1zM172 202h1v3h-1zM172 208h1v3h-1zM172 214h1v3h-1zM172 220h1v3h-1zM172 226h1v3h-1zM172 232h1v3h-1zM172 238h1v3h-1zM172 244h1v3h-1zM172 250h1v3h-1zM172 256h1v3h-1zM172 262h1v3h-1zM172 268h1v3h-1zM172 274h1v3h-1zM172 280h1v3h-1zM172 286h1v3h-1zM172 35h1v2h-1zM204 40h1v3h-1zM204 46h1v3h-1zM204 52h1v3h-1zM204 58h1v3h-1zM204 64h1v3h-1zM204 70h1v3h-1zM204 76h1v3h-1zM204 82h1v3h-1zM204 88h1v3h-1zM204 94h1v3h-1zM204 100h1v3h-1zM204 106h1v3h-1zM204 112h1v3h-1zM204 118h1v3h-1zM204 124h1v3h-1zM204 130h1v3h-1zM204 136h1v3h-1zM204 142h1v3h-1zM204 148h1v3h-1zM204 154h1v3h-1zM204 160h1v3h-1zM204 166h1v3h-1zM204 172h1v3h-1zM204 178h1v3h-1zM204 184h1v3h-1zM204 190h1v3h-1zM204 196h1v3h-1zM204 202h1v3h-1zM204 208h1v3h-1zM204 214h1v3h-1zM204 220h1v3h-1zM204 226h1v3h-1zM204 232h1v3h-1zM204 238h1v3h-1zM204 244h1v3h-1zM204 250h1v3h-1zM204 256h1v3h-1zM204 262h1v3h-1zM204 268h1v3h-1zM204 274h1v3h-1zM204 280h1v3h-1zM204 286h1v3h-1zM204 35h1v2h-1zM236 40h1v3h-1zM236 46h1v3h-1zM236 52h1v3h-1zM236 58h1v3h-1zM236 64h1v3h-1zM236 70h1v3h-1zM236 76h1v3h-1zM236 82h1v3h-1zM236 88h1v3h-1zM236 94h1v3h-1zM236 100h1v3h-1zM236 106h1v3h-1zM236 112h1v3h-1zM236 118h1v3h-1zM236 124h1v3h-1zM236 130h1v3h-1zM236 136h1v3h-1zM236 142h1v3h-1zM236 148h1v3h-1zM236 154h1v3h-1zM236 160h1v3h-1zM236 166h1v3h-1zM236 172h1v3h-1zM236 178h1v3h-1zM236 184h1v3h-1zM236 190h1v3h-1zM236 196h1v3h-1zM236 202h1v3h-1zM236 208h1v3h-1zM236 214h1v3h-1zM236 220h1v3h-1zM236 226h1v3h-1zM236 232h1v3h-1zM236 238h1v3h-1zM236 244h1v3h-1zM236 250h1v3h-1zM236 256h1v3h-1zM236 262h1v3h-1zM236 268h1v3h-1zM236 274h1v3h-1zM236 280h1v3h-1zM236 286h1v3h-1zM236 35h1v2h-1zM268 40h1v3h-1zM268 46h1v3h-1zM268 52h1v3h-1zM268 58h1v3h-1zM268 64h1v3h-1zM268 70h1v3h-1zM268 76h1v3h-1zM268 82h1v3h-1zM268 88h1v3h-1zM268 94h1v3h-1zM268 100h1v3h-1zM268 106h1v3h-1zM268 112h1v3h-1zM268 118h1v3h-1zM268 124h1v3h-1zM268 130h1v3h-1zM268 136h1v3h-1zM268 142h1v3h-1zM268 148h1v3h-1zM268 154h1v3h-1zM268 160h1v3h-1zM268 166h1v3h-1zM268 172h1v3h-1zM268 178h1v3h-1zM268 184h1v3h-1zM268 190h1v3h-1zM268 196h1v3h-1zM268 202h1v3h-1zM268 208h1v3h-1zM268 214h1v3h-1zM268 220h1v3h-1zM268 226h1v3h-1zM268 232h1v3h-1zM268 238h1v3h-1zM268 244h1v3h-1zM268 250h1v3h-1zM268 256h1v3h-1zM268 262h1v3h-1zM268 268h1v3h-1zM268 274h1v3h-1zM268 280h1v3h-1zM268 286h1v3h-1zM268 35h1v2h-1zM300 40h1v3h-1zM300 46h1v3h-1zM300 52h1v3h-1zM300 58h1v3h-1zM300 64h1v3h-1zM300 70h1v3h-1zM300 76h1v3h-1zM300 82h1v3h-1zM300 88h1v3h-1zM300 94h1v3h-1zM300 100h1v3h-1zM300 106h1v3h-1zM300 112h1v3h-1zM300 118h1v3h-1zM300 124h1v3h-1zM300 130h1v3h-1zM300 136h1v3h-1zM300 142h1v3h-1zM300 148h1v3h-1zM300 154h1v3h-1zM300 160h1v3h-1zM300 166h1v3h-1zM300 172h1v3h-1zM300 178h1v3h-1zM300 184h1v3h-1zM300 190h1v3h-1zM300 196h1v3h-1zM300 202h1v3h-1zM300 208h1v3h-1zM300 214h1v3h-1zM300 220h1v3h-1zM300 226h1v3h-1zM300 232h1v3h-1zM300 238h1v3h-1zM300 244h1v3h-1zM300 250h1v3h-1zM300 256h1v3h-1zM300 262h1v3h-1zM300 268h1v3h-1zM300 274h1v3h-1zM300 280h1v3h-1zM300 286h1v3h-1zM300 35h1v2h-1zM332 40h1v3h-1zM332 46h1v3h-1zM332 52h1v3h-1zM332 58h1v3h-1zM332 64h1v3h-1zM332 70h1v3h-1zM332 76h1v3h-1zM332 82h1v3h-1zM332 88h1v3h-1zM332 94h1v3h-1zM332 100h1v3h-1zM332 106h1v3h-1zM332 112h1v3h-1zM332 118h1v3h-1zM332 124h1v3h-1zM332 130h1v3h-1zM332 136h1v3h-1zM332 142h1v3h-1zM332 148h1v3h-1zM332 154h1v3h-1zM332 160h1v3h-1zM332 166h1v3h-1zM332 172h1v3h-1zM332 178h1v3h-1zM332 184h1v3h-1zM332 190h1v3h-1zM332 196h1v3h-1zM332 202h1v3h-1zM332 208h1v3h-1zM332 214h1v3h-1zM332 220h1v3h-1zM332 226h1v3h-1zM332 232h1v3h-1zM332 238h1v3h-1zM332 244h1v3h-1zM332 250h1v3h-1zM332 256h1v3h-1zM332 262h1v3h-1zM332 268h1v3h-1zM332 274h1v3h-1zM332 280h1v3h-1zM332 286h1v3h-1zM332 35h1v2h-1zM364 40h1v3h-1zM364 46h1v3h-1zM364 52h1v3h-1zM364 58h1v3h-1zM364 64h1v3h-1zM364 70h1v3h-1zM364 76h1v3h-1zM364 82h1v3h-1zM364 88h1v3h-1zM364 94h1v3h-1zM364 100h1v3h-1zM364 106h1v3h-1zM364 112h1v3h-1zM364 118h1v3h-1zM364 124h1v3h-1zM364 130h1v3h-1zM364 136h1v3h-1zM364 142h1v3h-1zM364 148h1v3h-1zM364 154h1v3h-1zM364 160h1v3h-1zM364 166h1v3h-1zM364 172h1v3h-1zM364 178h1v3h-1zM364 184h1v3h-1zM364 190h1v3h-1zM364 196h1v3h-1zM364 202h1v3h-1zM364 208h1v3h-1zM364 214h1v3h-1zM364 220h1v3h-1zM364 226h1v3h-1zM364 232h1v3h-1zM364 238h1v3h-1zM364 244h1v3h-1zM364 250h1v3h-1zM364 256h1v3h-1zM364 262h1v3h-1zM364 268h1v3h-1zM364 274h1v3h-1zM364 280h1v3h-1zM364 286h1v3h-1zM364 35h1v2h-1zM396 40h1v3h-1zM396 46h1v3h-1zM396 52h1v3h-1zM396 58h1v3h-1zM396 64h1v3h-1zM396 70h1v3h-1zM396 76h1v3h-1zM396 82h1v3h-1zM396 88h1v3h-1zM396 94h1v3h-1zM396 100h1v3h-1zM396 106h1v3h-1zM396 112h1v3h-1zM396 118h1v3h-1zM396 124h1v3h-1zM396 130h1v3h-1zM396 136h1v3h-1zM396 142h1v3h-1zM396 148h1v3h-1zM396 154h1v3h-1zM396 160h1v3h-1zM396 166h1v3h-1zM396 172h1v3h-1zM396 178h1v3h-1zM396 184h1v3h-1zM396 190h1v3h-1zM396 196h1v3h-1zM396 202h1v3h-1zM396 208h1v3h-1zM396 214h1v3h-1zM396 220h1v3h-1zM396 226h1v3h-1zM396 232h1v3h-1zM396 238h1v3h-1zM396 244h1v3h-1zM396 250h1v3h-1zM396 256h1v3h-1zM396 262h1v3h-1zM396 268h1v3h-1zM396 274h1v3h-1zM396 280h1v3h-1zM396 286h1v3h-1zM396 35h1v2h-1zM428 40h1v3h-1zM428 46h1v3h-1zM428 52h1v3h-1zM428 58h1v3h-1zM428 64h1v3h-1zM428 70h1v3h-1zM428 76h1v3h-1zM428 82h1v3h-1zM428 88h1v3h-1zM428 94h1v3h-1zM428 100h1v3h-1zM428 106h1v3h-1zM428 112h1v3h-1zM428 118h1v3h-1zM428 124h1v3h-1zM428 130h1v3h-1zM428 136h1v3h-1zM428 142h1v3h-1zM428 148h1v3h-1zM428 154h1v3h-1zM428 160h1v3h-1zM428 166h1v3h-1zM428 172h1v3h-1zM428 178h1v3h-1zM428 184h1v3h-1zM428 190h1v3h-1zM428 196h1v3h-1zM428 202h1v3h-1zM428 208h1v3h-1zM428 214h1v3h-1zM428 220h1v3h-1zM428 226h1v3h-1zM428 232h1v3h-1zM428 238h1v3h-1zM428 244h1v3h-1zM428 250h1v3h-1zM428 256h1v3h-1zM428 262h1v3h-1zM428 268h1v3h-1zM428 274h1v3h-1zM428 280h1v3h-1zM428 286h1v3h-1zM428 35h1v2h-1zM460 40h1v3h-1zM460 46h1v3h-1zM460 52h1v3h-1zM460 58h1v3h-1zM460 64h1v3h-1zM460 70h1v3h-1zM460 76h1v3h-1zM460 82h1v3h-1zM460 88h1v3h-1zM460 94h1v3h-1zM460 100h1v3h-1zM460 106h1v3h-1zM460 112h1v3h-1zM460 118h1v3h-1zM460 124h1v3h-1zM460 130h1v3h-1zM460 136h1v3h-1zM460 142h1v3h-1zM460 148h1v3h-1zM460 154h1v3h-1zM460 160h1v3h-1zM460 166h1v3h-1zM460 172h1v3h-1zM460 178h1v3h-1zM460 184h1v3h-1zM460 190h1v3h-1zM460 196h1v3h-1zM460 202h1v3h-1zM460 208h1v3h-1zM460 214h1v3h-1zM460 220h1v3h-1zM460 226h1v3h-1zM460 232h1v3h-1zM460 238h1v3h-1zM460 244h1v3h-1zM460 250h1v3h-1zM460 256h1v3h-1zM460 262h1v3h-1zM460 268h1v3h-1zM460 274h1v3h-1zM460 280h1v3h-1zM460 286h1v3h-1zM460 35h1v2h-1zM492 40h1v3h-1zM492 46h1v3h-1zM492 52h1v3h-1zM492 58h1v3h-1zM492 64h1v3h-1zM492 70h1v3h-1zM492 76h1v3h-1zM492 82h1v3h-1zM492 88h1v3h-1zM492 94h1v3h-1zM492 100h1v3h-1zM492 106h1v3h-1zM492 112h1v3h-1zM492 118h1v3h-1zM492 124h1v3h-1zM492 130h1v3h-1zM492 136h1v3h-1zM492 142h1v3h-1zM492 148h1v3h-1zM492 154h1v3h-1zM492 160h1v3h-1zM492 166h1v3h-1zM492 172h1v3h-1zM492 178h1v3h-1zM492 184h1v3h-1zM492 190h1v3h-1zM492 196h1v3h-1zM492 202h1v3h-1zM492 208h1v3h-1zM492 214h1v3h-1zM492 220h1v3h-1zM492 226h1v3h-1zM492 232h1v3h-1zM492 238h1v3h-1zM492 244h1v3h-1zM492 250h1v3h-1zM492 256h1v3h-1zM492 262h1v3h-1zM492 268h1v3h-1zM492 274h1v3h-1zM492 280h1v3h-1zM492 286h1v3h-1zM492 35h1v2h-1zM524 40h1v3h-1zM524 46h1v3h-1zM524 52h1v3h-1zM524 58h1v3h-1zM524 64h1v3h-1zM524 70h1v3h-1zM524 76h1v3h-1zM524 82h1v3h-1zM524 88h1v3h-1zM524 94h1v3h-1zM524 100h1v3h-1zM524 106h1v3h-1zM524 112h1v3h-1zM524 118h1v3h-1zM524 124h1v3h-1zM524 130h1v3h-1zM524 136h1v3h-1zM524 142h1v3h-1zM524 148h1v3h-1zM524 154h1v3h-1zM524 160h1v3h-1zM524 166h1v3h-1zM524 172h1v3h-1zM524 178h1v3h-1zM524 184h1v3h-1zM524 190h1v3h-1zM524 196h1v3h-1zM524 202h1v3h-1zM524 208h1v3h-1zM524 214h1v3h-1zM524 220h1v3h-1zM524 226h1v3h-1zM524 232h1v3h-1zM524 238h1v3h-1zM524 244h1v3h-1zM524 250h1v3h-1zM524 256h1v3h-1zM524 262h1v3h-1zM524 268h1v3h-1zM524 274h1v3h-1zM524 280h1v3h-1zM524 286h1v3h-1zM524 35h1v2h-1zM556 40h1v3h-1zM556 46h1v3h-1zM556 52h1v3h-1zM556 58h1v3h-1zM556 64h1v3h-1zM556 70h1v3h-1zM556 76h1v3h-1zM556 82h1v3h-1zM556 88h1v3h-1zM556 94h1v3h-1zM556 100h1v3h-1zM556 106h1v3h-1zM556 112h1v3h-1zM556 118h1v3h-1zM556 124h1v3h-1zM556 130h1v3h-1zM556 136h1v3h-1zM556 142h1v3h-1zM556 148h1v3h-1zM556 154h1v3h-1zM556 160h1v3h-1zM556 166h1v3h-1zM556 172h1v3h-1zM556 178h1v3h-1zM556 184h1v3h-1zM556 190h1v3h-1zM556 196h1v3h-1zM556 202h1v3h-1zM556 208h1v3h-1zM556 214h1v3h-1zM556 220h1v3h-1zM556 226h1v3h-1zM556 232h1v3h-1zM556 238h1v3h-1zM556 244h1v3h-1zM556 250h1v3h-1zM556 256h1v3h-1zM556 262h1v3h-1zM556 268h1v3h-1zM556 274h1v3h-1zM556 280h1v3h-1zM556 286h1v3h-1zM556 35h1v2h-1zM588 40h1v3h-1zM588 46h1v3h-1zM588 52h1v3h-1zM588 58h1v3h-1zM588 64h1v3h-1zM588 70h1v3h-1zM588 76h1v3h-1zM588 82h1v3h-1zM588 88h1v3h-1zM588 94h1v3h-1zM588 100h1v3h-1zM588 106h1v3h-1zM588 112h1v3h-1zM588 118h1v3h-1zM588 124h1v3h-1zM588 130h1v3h-1zM588 136h1v3h-1zM588 142h1v3h-1zM588 148h1v3h-1zM588 154h1v3h-1zM588 160h1v3h-1zM588 166h1v3h-1zM588 172h1v3h-1zM588 178h1v3h-1zM588 184h1v3h-1zM588 190h1v3h-1zM588 196h1v3h-1zM588 202h1v3h-1zM588 208h1v3h-1zM588 214h1v3h-1zM588 220h1v3h-1zM588 226h1v3h-1zM588 232h1v3h-1zM588 238h1v3h-1zM588 244h1v3h-1zM588 250h1v3h-1zM588 256h1v3h-1zM588 262h1v3h-1zM588 268h1v3h-1zM588 274h1v3h-1zM588 280h1v3h-1zM588 286h1v3h-1zM588 35h1v2h-1zM620 40h1v3h-1zM620 46h1v3h-1zM620 52h1v3h-1zM620 58h1v3h-1zM620 64h1v3h-1zM620 70h1v3h-1zM620 76h1v3h-1zM620 82h1v3h-1zM620 88h1v3h-1zM620 94h1v3h-1zM620 100h1v3h-1zM620 106h1v3h-1zM620 112h1v3h-1zM620 118h1v3h-1zM620 124h1v3h-1zM620 130h1v3h-1zM620 136h1v3h-1zM620 142h1v3h-1zM620 148h1v3h-1zM620 154h1v3h-1zM620 160h1v3h-1zM620 166h1v3h-1zM620 172h1v3h-1zM620 178h1v3h-1zM620 184h1v3h-1zM620 190h1v3h-1zM620 196h1v3h-1zM620 202h1v3h-1zM620 208h1v3h-1zM620 214h1v3h-1zM620 220h1v3h-1zM620 226h1v3h-1zM620 232h1v3h-1zM620 238h1v3h-1zM620 244h1v3h-1zM620 250h1v3h-1zM620 256h1v3h-1zM620 262h1v3h-1zM620 268h1v3h-1zM620 274h1v3h-1zM620 280h1v3h-1zM620 286h1v3h-1zM620 35h1v2h-1zM652 40h1v3h-1zM652 46h1v3h-1zM652 52h1v3h-1zM652 58h1v3h-1zM652 64h1v3h-1zM652 70h1v3h-1zM652 76h1v3h-1zM652 82h1v3h-1zM652 88h1v3h-1zM652 94h1v3h-1zM652 100h1v3h-1zM652 106h1v3h-1zM652 112h1v3h-1zM652 118h1v3h-1zM652 124h1v3h-1zM652 130h1v3h-1zM652 136h1v3h-1zM652 142h1v3h-1zM652 148h1v3h-1zM652 154h1v3h-1zM652 160h1v3h-1zM652 166h1v3h-1zM652 172h1v3h-1zM652 178h1v3h-1zM652 184h1v3h-1zM652 190h1v3h-1zM652 196h1v3h-1zM652 202h1v3h-1zM652 208h1v3h-1zM652 214h1v3h-1zM652 220h1v3h-1zM652 226h1v3h-1zM652 232h1v3h-1zM652 238h1v3h-1zM652 244h1v3h-1zM652 250h1v3h-1zM652 256h1v3h-1zM652 262h1v3h-1zM652 268h1v3h-1zM652 274h1v3h-1zM652 280h1v3h-1zM652 286h1v3h-1zM652 35h1v2h-1zM13 421h3v1h-3zM19 421h3v1h-3zM25 421h3v1h-3zM31 421h3v1h-3zM37 421h3v1h-3zM43 421h3v1h-3zM49 421h3v1h-3zM55 421h3v1h-3zM61 421h3v1h-3zM67 421h3v1h-3zM73 421h3v1h-3zM79 421h3v1h-3zM85 421h3v1h-3zM91 421h3v1h-3zM97 421h3v1h-3zM103 421h3v1h-3zM109 421h3v1h-3zM115 421h3v1h-3zM121 421h3v1h-3zM127 421h3v1h-3zM133 421h3v1h-3zM139 421h3v1h-3zM145 421h3v1h-3zM151 421h3v1h-3zM157 421h3v1h-3zM163 421h3v1h-3zM169 421h3v1h-3zM175 421h3v1h-3zM181 421h3v1h-3zM187 421h3v1h-3zM193 421h3v1h-3zM199 421h3v1h-3zM205 421h3v1h-3zM211 421h3v1h-3zM217 421h3v1h-3zM223 421h3v1h-3zM229 421h3v1h-3zM235 421h3v1h-3zM241 421h3v1h-3zM247 421h3v1h-3zM253 421h3v1h-3zM259 421h3v1h-3zM265 421h3v1h-3zM271 421h3v1h-3zM277 421h3v1h-3zM283 421h3v1h-3zM289 421h3v1h-3zM295 421h3v1h-3zM301 421h3v1h-3zM307 421h3v1h-3zM313 421h3v1h-3zM319 421h3v1h-3zM325 421h3v1h-3zM331 421h3v1h-3zM337 421h3v1h-3zM343 421h3v1h-3zM349 421h3v1h-3zM355 421h3v1h-3zM361 421h3v1h-3zM367 421h3v1h-3zM373 421h3v1h-3zM379 421h3v1h-3zM385 421h3v1h-3zM391 421h3v1h-3zM397 421h3v1h-3zM403 421h3v1h-3zM409 421h3v1h-3zM415 421h3v1h-3zM421 421h3v1h-3zM427 421h3v1h-3zM433 421h3v1h-3zM439 421h3v1h-3zM445 421h3v1h-3zM451 421h3v1h-3zM457 421h3v1h-3zM463 421h3v1h-3zM469 421h3v1h-3zM475 421h3v1h-3zM481 421h3v1h-3zM487 421h3v1h-3zM493 421h3v1h-3zM499 421h3v1h-3zM505 421h3v1h-3zM511 421h3v1h-3zM517 421h3v1h-3zM523 421h3v1h-3zM529 421h3v1h-3zM535 421h3v1h-3zM541 421h3v1h-3zM547 421h3v1h-3zM553 421h3v1h-3zM559 421h3v1h-3zM565 421h3v1h-3zM571 421h3v1h-3zM577 421h3v1h-3zM583 421h3v1h-3zM589 421h3v1h-3zM595 421h3v1h-3zM601 421h3v1h-3zM607 421h3v1h-3zM613 421h3v1h-3zM619 421h3v1h-3zM625 421h3v1h-3zM631 421h3v1h-3zM637 421h3v1h-3zM643 421h3v1h-3zM649 421h3v1h-3zM655 421h3v1h-3zM661 421h3v1h-3zM667 421h3v1h-3zM673 421h3v1h-3zM44 298h1v3h-1zM44 304h1v3h-1zM44 310h1v3h-1zM44 316h1v3h-1zM44 322h1v3h-1zM44 328h1v3h-1zM44 334h1v3h-1zM44 340h1v3h-1zM44 346h1v3h-1zM44 352h1v3h-1zM44 358h1v3h-1zM44 364h1v3h-1zM44 370h1v3h-1zM44 376h1v3h-1zM44 382h1v3h-1zM44 388h1v3h-1zM44 394h1v3h-1zM44 400h1v3h-1zM44 406h1v3h-1zM44 412h1v3h-1zM44 418h1v3h-1zM76 298h1v3h-1zM76 304h1v3h-1zM76 310h1v3h-1zM76 316h1v3h-1zM76 322h1v3h-1zM76 328h1v3h-1zM76 334h1v3h-1zM76 340h1v3h-1zM76 346h1v3h-1zM76 352h1v3h-1zM76 358h1v3h-1zM76 364h1v3h-1zM76 370h1v3h-1zM76 376h1v3h-1zM76 382h1v3h-1zM76 388h1v3h-1zM76 394h1v3h-1zM76 400h1v3h-1zM76 406h1v3h-1zM76 412h1v3h-1zM76 418h1v3h-1zM108 298h1v3h-1zM108 304h1v3h-1zM108 310h1v3h-1zM108 316h1v3h-1zM108 322h1v3h-1zM108 328h1v3h-1zM108 334h1v3h-1zM108 340h1v3h-1zM108 346h1v3h-1zM108 352h1v3h-1zM108 358h1v3h-1zM108 364h1v3h-1zM108 370h1v3h-1zM108 376h1v3h-1zM108 382h1v3h-1zM108 388h1v3h-1zM108 394h1v3h-1zM108 400h1v3h-1zM108 406h1v3h-1zM108 412h1v3h-1zM108 418h1v3h-1zM140 298h1v3h-1zM140 304h1v3h-1zM140 310h1v3h-1zM140 316h1v3h-1zM140 322h1v3h-1zM140 328h1v3h-1zM140 334h1v3h-1zM140 340h1v3h-1zM140 346h1v3h-1zM140 352h1v3h-1zM140 358h1v3h-1zM140 364h1v3h-1zM140 370h1v3h-1zM140 376h1v3h-1zM140 382h1v3h-1zM140 388h1v3h-1zM140 394h1v3h-1zM140 400h1v3h-1zM140 406h1v3h-1zM140 412h1v3h-1zM140 418h1v3h-1zM172 298h1v3h-1zM172 304h1v3h-1zM172 310h1v3h-1zM172 316h1v3h-1zM172 322h1v3h-1zM172 328h1v3h-1zM172 334h1v3h-1zM172 340h1v3h-1zM172 346h1v3h-1zM172 352h1v3h-1zM172 358h1v3h-1zM172 364h1v3h-1zM172 370h1v3h-1zM172 376h1v3h-1zM172 382h1v3h-1zM172 388h1v3h-1zM172 394h1v3h-1zM172 400h1v3h-1zM172 406h1v3h-1zM172 412h1v3h-1zM172 418h1v3h-1zM204 298h1v3h-1zM204 304h1v3h-1zM204 310h1v3h-1zM204 316h1v3h-1zM204 322h1v3h-1zM204 328h1v3h-1zM204 334h1v3h-1zM204 340h1v3h-1zM204 346h1v3h-1zM204 352h1v3h-1zM204 358h1v3h-1zM204 364h1v3h-1zM204 370h1v3h-1zM204 376h1v3h-1zM204 382h1v3h-1zM204 388h1v3h-1zM204 394h1v3h-1zM204 400h1v3h-1zM204 406h1v3h-1zM204 412h1v3h-1zM204 418h1v3h-1zM236 298h1v3h-1zM236 304h1v3h-1zM236 310h1v3h-1zM236 316h1v3h-1zM236 322h1v3h-1zM236 328h1v3h-1zM236 334h1v3h-1zM236 340h1v3h-1zM236 346h1v3h-1zM236 352h1v3h-1zM236 358h1v3h-1zM236 364h1v3h-1zM236 370h1v3h-1zM236 376h1v3h-1zM236 382h1v3h-1zM236 388h1v3h-1zM236 394h1v3h-1zM236 400h1v3h-1zM236 406h1v3h-1zM236 412h1v3h-1zM236 418h1v3h-1zM268 298h1v3h-1zM268 304h1v3h-1zM268 310h1v3h-1zM268 316h1v3h-1zM268 322h1v3h-1zM268 328h1v3h-1zM268 334h1v3h-1zM268 340h1v3h-1zM268 346h1v3h-1zM268 352h1v3h-1zM268 358h1v3h-1zM268 364h1v3h-1zM268 370h1v3h-1zM268 376h1v3h-1zM268 382h1v3h-1zM268 388h1v3h-1zM268 394h1v3h-1zM268 400h1v3h-1zM268 406h1v3h-1zM268 412h1v3h-1zM268 418h1v3h-1zM300 298h1v3h-1zM300 304h1v3h-1zM300 310h1v3h-1zM300 316h1v3h-1zM300 322h1v3h-1zM300 328h1v3h-1zM300 334h1v3h-1zM300 340h1v3h-1zM300 346h1v3h-1zM300 352h1v3h-1zM300 358h1v3h-1zM300 364h1v3h-1zM300 370h1v3h-1zM300 376h1v3h-1zM300 382h1v3h-1zM300 388h1v3h-1zM300 394h1v3h-1zM300 400h1v3h-1zM300 406h1v3h-1zM300 412h1v3h-1zM300 418h1v3h-1zM332 298h1v3h-1zM332 304h1v3h-1zM332 310h1v3h-1zM332 316h1v3h-1zM332 322h1v3h-1zM332 328h1v3h-1zM332 334h1v3h-1zM332 340h1v3h-1zM332 346h1v3h-1zM332 352h1v3h-1zM332 358h1v3h-1zM332 364h1v3h-1zM332 370h1v3h-1zM332 376h1v3h-1zM332 382h1v3h-1zM332 388h1v3h-1zM332 394h1v3h-1zM332 400h1v3h-1zM332 406h1v3h-1zM332 412h1v3h-1zM332 418h1v3h-1zM364 298h1v3h-1zM364 304h1v3h-1zM364 310h1v3h-1zM364 316h1v3h-1zM364 322h1v3h-1zM364 328h1v3h-1zM364 334h1v3h-1zM364 340h1v3h-1zM364 346h1v3h-1zM364 352h1v3h-1zM364 358h1v3h-1zM364 364h1v3h-1zM364 370h1v3h-1zM364 376h1v3h-1zM364 382h1v3h-1zM364 388h1v3h-1zM364 394h1v3h-1zM364 400h1v3h-1zM364 406h1v3h-1zM364 412h1v3h-1zM364 418h1v3h-1zM396 298h1v3h-1zM396 304h1v3h-1zM396 310h1v3h-1zM396 316h1v3h-1zM396 322h1v3h-1zM396 328h1v3h-1zM396 334h1v3h-1zM396 340h1v3h-1zM396 346h1v3h-1zM396 352h1v3h-1zM396 358h1v3h-1zM396 364h1v3h-1zM396 370h1v3h-1zM396 376h1v3h-1zM396 382h1v3h-1zM396 388h1v3h-1zM396 394h1v3h-1zM396 400h1v3h-1zM396 406h1v3h-1zM396 412h1v3h-1zM396 418h1v3h-1zM428 298h1v3h-1zM428 304h1v3h-1zM428 310h1v3h-1zM428 316h1v3h-1zM428 322h1v3h-1zM428 328h1v3h-1zM428 334h1v3h-1zM428 340h1v3h-1zM428 346h1v3h-1zM428 352h1v3h-1zM428 358h1v3h-1zM428 364h1v3h-1zM428 370h1v3h-1zM428 376h1v3h-1zM428 382h1v3h-1zM428 388h1v3h-1zM428 394h1v3h-1zM428 400h1v3h-1zM428 406h1v3h-1zM428 412h1v3h-1zM428 418h1v3h-1zM460 298h1v3h-1zM460 304h1v3h-1zM460 310h1v3h-1zM460 316h1v3h-1zM460 322h1v3h-1zM460 328h1v3h-1zM460 334h1v3h-1zM460 340h1v3h-1zM460 346h1v3h-1zM460 352h1v3h-1zM460 358h1v3h-1zM460 364h1v3h-1zM460 370h1v3h-1zM460 376h1v3h-1zM460 382h1v3h-1zM460 388h1v3h-1zM460 394h1v3h-1zM460 400h1v3h-1zM460 406h1v3h-1zM460 412h1v3h-1zM460 418h1v3h-1zM492 298h1v3h-1zM492 304h1v3h-1zM492 310h1v3h-1zM492 316h1v3h-1zM492 322h1v3h-1zM492 328h1v3h-1zM492 334h1v3h-1zM492 340h1v3h-1zM492 346h1v3h-1zM492 352h1v3h-1zM492 358h1v3h-1zM492 364h1v3h-1zM492 370h1v3h-1zM492 376h1v3h-1zM492 382h1v3h-1zM492 388h1v3h-1zM492 394h1v3h-1zM492 400h1v3h-1zM492 406h1v3h-1zM492 412h1v3h-1zM492 418h1v3h-1zM524 298h1v3h-1zM524 304h1v3h-1zM524 310h1v3h-1zM524 316h1v3h-1zM524 322h1v3h-1zM524 328h1v3h-1zM524 334h1v3h-1zM524 340h1v3h-1zM524 346h1v3h-1zM524 352h1v3h-1zM524 358h1v3h-1zM524 364h1v3h-1zM524 370h1v3h-1zM524 376h1v3h-1zM524 382h1v3h-1zM524 388h1v3h-1zM524 394h1v3h-1zM524 400h1v3h-1zM524 406h1v3h-1zM524 412h1v3h-1zM524 418h1v3h-1zM556 298h1v3h-1zM556 304h1v3h-1zM556 310h1v3h-1zM556 316h1v3h-1zM556 322h1v3h-1zM556 328h1v3h-1zM556 334h1v3h-1zM556 340h1v3h-1zM556 346h1v3h-1zM556 352h1v3h-1zM556 358h1v3h-1zM556 364h1v3h-1zM556 370h1v3h-1zM556 376h1v3h-1zM556 382h1v3h-1zM556 388h1v3h-1zM556 394h1v3h-1zM556 400h1v3h-1zM556 406h1v3h-1zM556 412h1v3h-1zM556 418h1v3h-1zM588 298h1v3h-1zM588 304h1v3h-1zM588 310h1v3h-1zM588 316h1v3h-1zM588 322h1v3h-1zM588 328h1v3h-1zM588 334h1v3h-1zM588 340h1v3h-1zM588 346h1v3h-1zM588 352h1v3h-1zM588 358h1v3h-1zM588 364h1v3h-1zM588 370h1v3h-1zM588 376h1v3h-1zM588 382h1v3h-1zM588 388h1v3h-1zM588 394h1v3h-1zM588 400h1v3h-1zM588 406h1v3h-1zM588 412h1v3h-1zM588 418h1v3h-1zM620 298h1v3h-1zM620 304h1v3h-1zM620 310h1v3h-1zM620 316h1v3h-1zM620 322h1v3h-1zM620 328h1v3h-1zM620 334h1v3h-1zM620 340h1v3h-1zM620 346h1v3h-1zM620 352h1v3h-1zM620 358h1v3h-1zM620 364h1v3h-1zM620 370h1v3h-1zM620 376h1v3h-1zM620 382h1v3h-1zM620 388h1v3h-1zM620 394h1v3h-1zM620 400h1v3h-1zM620 406h1v3h-1zM620 412h1v3h-1zM620 418h1v3h-1zM652 298h1v3h-1zM652 304h1v3h-1zM652 310h1v3h-1zM652 316h1v3h-1zM652 322h1v3h-1zM652 328h1v3h-1zM652 334h1v3h-1zM652 340h1v3h-1zM652 346h1v3h-1zM652 352h1v3h-1zM652 358h1v3h-1zM652 364h1v3h-1zM652 370h1v3h-1zM652 376h1v3h-1zM652 382h1v3h-1zM652 388h1v3h-1zM652 394h1v3h-1zM652 400h1v3h-1zM652 406h1v3h-1zM652 412h1v3h-1zM652 418h1v3h-1zM13 494h3v1h-3zM19 494h3v1h-3zM25 494h3v1h-3zM31 494h3v1h-3zM37 494h3v1h-3zM43 494h3v1h-3zM49 494h3v1h-3zM55 494h3v1h-3zM61 494h3v1h-3zM67 494h3v1h-3zM73 494h3v1h-3zM79 494h3v1h-3zM85 494h3v1h-3zM91 494h3v1h-3zM97 494h3v1h-3zM103 494h3v1h-3zM109 494h3v1h-3zM115 494h3v1h-3zM121 494h3v1h-3zM127 494h3v1h-3zM133 494h3v1h-3zM139 494h3v1h-3zM145 494h3v1h-3zM151 494h3v1h-3zM157 494h3v1h-3zM163 494h3v1h-3zM169 494h3v1h-3zM175 494h3v1h-3zM181 494h3v1h-3zM187 494h3v1h-3zM193 494h3v1h-3zM199 494h3v1h-3zM205 494h3v1h-3zM211 494h3v1h-3zM217 494h3v1h-3zM223 494h3v1h-3zM229 494h3v1h-3zM235 494h3v1h-3zM241 494h3v1h-3zM247 494h3v1h-3zM253 494h3v1h-3zM259 494h3v1h-3zM265 494h3v1h-3zM271 494h3v1h-3zM277 494h3v1h-3zM283 494h3v1h-3zM289 494h3v1h-3zM295 494h3v1h-3zM301 494h3v1h-3zM307 494h3v1h-3zM313 494h3v1h-3zM319 494h3v1h-3zM325 494h3v1h-3zM331 494h3v1h-3zM337 494h3v1h-3zM343 494h3v1h-3zM349 494h3v1h-3zM355 494h3v1h-3zM361 494h3v1h-3zM367 494h3v1h-3zM373 494h3v1h-3zM379 494h3v1h-3zM385 494h3v1h-3zM391 494h3v1h-3zM397 494h3v1h-3zM403 494h3v1h-3zM409 494h3v1h-3zM415 494h3v1h-3zM421 494h3v1h-3zM427 494h3v1h-3zM433 494h3v1h-3zM439 494h3v1h-3zM445 494h3v1h-3zM451 494h3v1h-3zM457 494h3v1h-3zM463 494h3v1h-3zM469 494h3v1h-3zM475 494h3v1h-3zM481 494h3v1h-3zM487 494h3v1h-3zM493 494h3v1h-3zM499 494h3v1h-3zM505 494h3v1h-3zM511 494h3v1h-3zM517 494h3v1h-3zM523 494h3v1h-3zM529 494h3v1h-3zM535 494h3v1h-3zM541 494h3v1h-3zM547 494h3v1h-3zM553 494h3v1h-3zM559 494h3v1h-3zM565 494h3v1h-3zM571 494h3v1h-3zM577 494h3v1h-3zM583 494h3v1h-3zM589 494h3v1h-3zM595 494h3v1h-3zM601 494h3v1h-3zM607 494h3v1h-3zM613 494h3v1h-3zM619 494h3v1h-3zM625 494h3v1h-3zM631 494h3v1h-3zM637 494h3v1h-3zM643 494h3v1h-3zM649 494h3v1h-3zM655 494h3v1h-3zM661 494h3v1h-3zM667 494h3v1h-3zM673 494h3v1h-3zM44 430h1v3h-1zM44 436h1v3h-1zM44 442h1v3h-1zM44 448h1v3h-1zM44 454h1v3h-1zM44 460h1v3h-1zM44 466h1v3h-1zM44 472h1v3h-1zM44 478h1v3h-1zM44 484h1v3h-1zM44 490h1v3h-1zM44 496h1v3h-1zM44 502h1v3h-1zM44 508h1v3h-1zM44 514h1v3h-1zM44 520h1v3h-1zM44 526h1v3h-1zM44 532h1v3h-1zM44 538h1v3h-1zM44 544h1v3h-1zM44 550h1v2h-1zM44 425h1v2h-1zM76 430h1v3h-1zM76 436h1v3h-1zM76 442h1v3h-1zM76 448h1v3h-1zM76 454h1v3h-1zM76 460h1v3h-1zM76 466h1v3h-1zM76 472h1v3h-1zM76 478h1v3h-1zM76 484h1v3h-1zM76 490h1v3h-1zM76 496h1v3h-1zM76 502h1v3h-1zM76 508h1v3h-1zM76 514h1v3h-1zM76 520h1v3h-1zM76 526h1v3h-1zM76 532h1v3h-1zM76 538h1v3h-1zM76 544h1v3h-1zM76 550h1v2h-1zM76 425h1v2h-1zM108 430h1v3h-1zM108 436h1v3h-1zM108 442h1v3h-1zM108 448h1v3h-1zM108 454h1v3h-1zM108 460h1v3h-1zM108 466h1v3h-1zM108 472h1v3h-1zM108 478h1v3h-1zM108 484h1v3h-1zM108 490h1v3h-1zM108 496h1v3h-1zM108 502h1v3h-1zM108 508h1v3h-1zM108 514h1v3h-1zM108 520h1v3h-1zM108 526h1v3h-1zM108 532h1v3h-1zM108 538h1v3h-1zM108 544h1v3h-1zM108 550h1v2h-1zM108 425h1v2h-1zM140 430h1v3h-1zM140 436h1v3h-1zM140 442h1v3h-1zM140 448h1v3h-1zM140 454h1v3h-1zM140 460h1v3h-1zM140 466h1v3h-1zM140 472h1v3h-1zM140 478h1v3h-1zM140 484h1v3h-1zM140 490h1v3h-1zM140 496h1v3h-1zM140 502h1v3h-1zM140 508h1v3h-1zM140 514h1v3h-1zM140 520h1v3h-1zM140 526h1v3h-1zM140 532h1v3h-1zM140 538h1v3h-1zM140 544h1v3h-1zM140 550h1v2h-1zM140 425h1v2h-1zM172 430h1v3h-1zM172 436h1v3h-1zM172 442h1v3h-1zM172 448h1v3h-1zM172 454h1v3h-1zM172 460h1v3h-1zM172 466h1v3h-1zM172 472h1v3h-1zM172 478h1v3h-1zM172 484h1v3h-1zM172 490h1v3h-1zM172 496h1v3h-1zM172 502h1v3h-1zM172 508h1v3h-1zM172 514h1v3h-1zM172 520h1v3h-1zM172 526h1v3h-1zM172 532h1v3h-1zM172 538h1v3h-1zM172 544h1v3h-1zM172 550h1v2h-1zM172 425h1v2h-1zM204 430h1v3h-1zM204 436h1v3h-1zM204 442h1v3h-1zM204 448h1v3h-1zM204 454h1v3h-1zM204 460h1v3h-1zM204 466h1v3h-1zM204 472h1v3h-1zM204 478h1v3h-1zM204 484h1v3h-1zM204 490h1v3h-1zM204 496h1v3h-1zM204 502h1v3h-1zM204 508h1v3h-1zM204 514h1v3h-1zM204 520h1v3h-1zM204 526h1v3h-1zM204 532h1v3h-1zM204 538h1v3h-1zM204 544h1v3h-1zM204 550h1v2h-1zM204 425h1v2h-1zM236 430h1v3h-1zM236 436h1v3h-1zM236 442h1v3h-1zM236 448h1v3h-1zM236 454h1v3h-1zM236 460h1v3h-1zM236 466h1v3h-1zM236 472h1v3h-1zM236 478h1v3h-1zM236 484h1v3h-1zM236 490h1v3h-1zM236 496h1v3h-1zM236 502h1v3h-1zM236 508h1v3h-1zM236 514h1v3h-1zM236 520h1v3h-1zM236 526h1v3h-1zM236 532h1v3h-1zM236 538h1v3h-1zM236 544h1v3h-1zM236 550h1v2h-1zM236 425h1v2h-1zM268 430h1v3h-1zM268 436h1v3h-1zM268 442h1v3h-1zM268 448h1v3h-1zM268 454h1v3h-1zM268 460h1v3h-1zM268 466h1v3h-1zM268 472h1v3h-1zM268 478h1v3h-1zM268 484h1v3h-1zM268 490h1v3h-1zM268 496h1v3h-1zM268 502h1v3h-1zM268 508h1v3h-1zM268 514h1v3h-1zM268 520h1v3h-1zM268 526h1v3h-1zM268 532h1v3h-1zM268 538h1v3h-1zM268 544h1v3h-1zM268 550h1v2h-1zM268 425h1v2h-1zM300 430h1v3h-1zM300 436h1v3h-1zM300 442h1v3h-1zM300 448h1v3h-1zM300 454h1v3h-1zM300 460h1v3h-1zM300 466h1v3h-1zM300 472h1v3h-1zM300 478h1v3h-1zM300 484h1v3h-1zM300 490h1v3h-1zM300 496h1v3h-1zM300 502h1v3h-1zM300 508h1v3h-1zM300 514h1v3h-1zM300 520h1v3h-1zM300 526h1v3h-1zM300 532h1v3h-1zM300 538h1v3h-1zM300 544h1v3h-1zM300 550h1v2h-1zM300 425h1v2h-1zM332 430h1v3h-1zM332 436h1v3h-1zM332 442h1v3h-1zM332 448h1v3h-1zM332 454h1v3h-1zM332 460h1v3h-1zM332 466h1v3h-1zM332 472h1v3h-1zM332 478h1v3h-1zM332 484h1v3h-1zM332 490h1v3h-1zM332 496h1v3h-1zM332 502h1v3h-1zM332 508h1v3h-1zM332 514h1v3h-1zM332 520h1v3h-1zM332 526h1v3h-1zM332 532h1v3h-1zM332 538h1v3h-1zM332 544h1v3h-1zM332 550h1v2h-1zM332 425h1v2h-1zM364 430h1v3h-1zM364 436h1v3h-1zM364 442h1v3h-1zM364 448h1v3h-1zM364 454h1v3h-1zM364 460h1v3h-1zM364 466h1v3h-1zM364 472h1v3h-1zM364 478h1v3h-1zM364 484h1v3h-1zM364 490h1v3h-1zM364 496h1v3h-1zM364 502h1v3h-1zM364 508h1v3h-1zM364 514h1v3h-1zM364 520h1v3h-1zM364 526h1v3h-1zM364 532h1v3h-1zM364 538h1v3h-1zM364 544h1v3h-1zM364 550h1v2h-1zM364 425h1v2h-1zM396 430h1v3h-1zM396 436h1v3h-1zM396 442h1v3h-1zM396 448h1v3h-1zM396 454h1v3h-1zM396 460h1v3h-1zM396 466h1v3h-1zM396 472h1v3h-1zM396 478h1v3h-1zM396 484h1v3h-1zM396 490h1v3h-1zM396 496h1v3h-1zM396 502h1v3h-1zM396 508h1v3h-1zM396 514h1v3h-1zM396 520h1v3h-1zM396 526h1v3h-1zM396 532h1v3h-1zM396 538h1v3h-1zM396 544h1v3h-1zM396 550h1v2h-1zM396 425h1v2h-1zM428 430h1v3h-1zM428 436h1v3h-1zM428 442h1v3h-1zM428 448h1v3h-1zM428 454h1v3h-1zM428 460h1v3h-1zM428 466h1v3h-1zM428 472h1v3h-1zM428 478h1v3h-1zM428 484h1v3h-1zM428 490h1v3h-1zM428 496h1v3h-1zM428 502h1v3h-1zM428 508h1v3h-1zM428 514h1v3h-1zM428 520h1v3h-1zM428 526h1v3h-1zM428 532h1v3h-1zM428 538h1v3h-1zM428 544h1v3h-1zM428 550h1v2h-1zM428 425h1v2h-1zM460 430h1v3h-1zM460 436h1v3h-1zM460 442h1v3h-1zM460 448h1v3h-1zM460 454h1v3h-1zM460 460h1v3h-1zM460 466h1v3h-1zM460 472h1v3h-1zM460 478h1v3h-1zM460 484h1v3h-1zM460 490h1v3h-1zM460 496h1v3h-1zM460 502h1v3h-1zM460 508h1v3h-1zM460 514h1v3h-1zM460 520h1v3h-1zM460 526h1v3h-1zM460 532h1v3h-1zM460 538h1v3h-1zM460 544h1v3h-1zM460 550h1v2h-1zM460 425h1v2h-1zM492 430h1v3h-1zM492 436h1v3h-1zM492 442h1v3h-1zM492 448h1v3h-1zM492 454h1v3h-1zM492 460h1v3h-1zM492 466h1v3h-1zM492 472h1v3h-1zM492 478h1v3h-1zM492 484h1v3h-1zM492 490h1v3h-1zM492 496h1v3h-1zM492 502h1v3h-1zM492 508h1v3h-1zM492 514h1v3h-1zM492 520h1v3h-1zM492 526h1v3h-1zM492 532h1v3h-1zM492 538h1v3h-1zM492 544h1v3h-1zM492 550h1v2h-1zM492 425h1v2h-1zM524 430h1v3h-1zM524 436h1v3h-1zM524 442h1v3h-1zM524 448h1v3h-1zM524 454h1v3h-1zM524 460h1v3h-1zM524 466h1v3h-1zM524 472h1v3h-1zM524 478h1v3h-1zM524 484h1v3h-1zM524 490h1v3h-1zM524 496h1v3h-1zM524 502h1v3h-1zM524 508h1v3h-1zM524 514h1v3h-1zM524 520h1v3h-1zM524 526h1v3h-1zM524 532h1v3h-1zM524 538h1v3h-1zM524 544h1v3h-1zM524 550h1v2h-1zM524 425h1v2h-1zM556 430h1v3h-1zM556 436h1v3h-1zM556 442h1v3h-1zM556 448h1v3h-1zM556 454h1v3h-1zM556 460h1v3h-1zM556 466h1v3h-1zM556 472h1v3h-1zM556 478h1v3h-1zM556 484h1v3h-1zM556 490h1v3h-1zM556 496h1v3h-1zM556 502h1v3h-1zM556 508h1v3h-1zM556 514h1v3h-1zM556 520h1v3h-1zM556 526h1v3h-1zM556 532h1v3h-1zM556 538h1v3h-1zM556 544h1v3h-1zM556 550h1v2h-1zM556 425h1v2h-1zM588 430h1v3h-1zM588 436h1v3h-1zM588 442h1v3h-1zM588 448h1v3h-1zM588 454h1v3h-1zM588 460h1v3h-1zM588 466h1v3h-1zM588 472h1v3h-1zM588 478h1v3h-1zM588 484h1v3h-1zM588 490h1v3h-1zM588 496h1v3h-1zM588 502h1v3h-1zM588 508h1v3h-1zM588 514h1v3h-1zM588 520h1v3h-1zM588 526h1v3h-1zM588 532h1v3h-1zM588 538h1v3h-1zM588 544h1v3h-1zM588 550h1v2h-1zM588 425h1v2h-1zM620 430h1v3h-1zM620 436h1v3h-1zM620 442h1v3h-1zM620 448h1v3h-1zM620 454h1v3h-1zM620 460h1v3h-1zM620 466h1v3h-1zM620 472h1v3h-1zM620 478h1v3h-1zM620 484h1v3h-1zM620 490h1v3h-1zM620 496h1v3h-1zM620 502h1v3h-1zM620 508h1v3h-1zM620 514h1v3h-1zM620 520h1v3h-1zM620 526h1v3h-1zM620 532h1v3h-1zM620 538h1v3h-1zM620 544h1v3h-1zM620 550h1v2h-1zM620 425h1v2h-1zM652 430h1v3h-1zM652 436h1v3h-1zM652 442h1v3h-1zM652 448h1v3h-1zM652 454h1v3h-1zM652 460h1v3h-1zM652 466h1v3h-1zM652 472h1v3h-1zM652 478h1v3h-1zM652 484h1v3h-1zM652 490h1v3h-1zM652 496h1v3h-1zM652 502h1v3h-1zM652 508h1v3h-1zM652 514h1v3h-1zM652 520h1v3h-1zM652 526h1v3h-1zM652 532h1v3h-1zM652 538h1v3h-1zM652 544h1v3h-1zM652 550h1v2h-1zM652 425h1v2h-1z"/>
<path shape-rendering="crispEdges" fill="#ffffff" d="M679 58h2v1h-2zM679 91h2v1h-2zM679 124h2v1h-2zM679 157h2v1h-2zM679 190h2v1h-2zM679 223h2v1h-2zM679 256h2v1h-2zM679 289h2v1h-2zM679 296h1v1h-1zM679 421h1v1h-1zM679 426h1v1h-1zM679 494h1v1h-1zM12 553h1v3h-1zM76 553h1v3h-1zM140 553h1v3h-1zM204 553h1v3h-1zM268 553h1v3h-1zM332 553h1v3h-1zM396 553h1v3h-1zM460 553h1v3h-1zM524 553h1v3h-1zM588 553h1v3h-1zM652 553h1v3h-1z"/>
<g clip-path="url(#cp1)" shape-rendering="crispEdges">
<path fill="#00ff00" d="M12 235h1v23h-1zM10 241h5v11h-5zM20 236h1v16h-1zM18 241h5v10h-5zM28 241h1v20h-1zM26 250h5v8h-5zM36 251h1v23h-1zM34 257h5v4h-5zM44 232h1v30h-1zM42 239h5v22h-5zM52 203h1v37h-1zM50 212h5v28h-5zM60 210h1v14h-1zM58 212h5v10h-5zM68 203h1v21h-1zM66 205h5v17h-5zM76 195h1v16h-1zM74 205h5v1h-5zM84 202h1v8h-1zM82 205h5v4h-5zM92 202h1v7h-1zM90 207h5v1h-5zM100 204h1v6h-1zM98 204h5v5h-5zM108 200h1v12h-1zM106 206h5v2h-5zM116 197h1v12h-1zM114 200h5v8h-5zM124 199h1v11h-1zM122 200h5v2h-5zM132 197h1v8h-1zM130 199h5v3h-5zM140 194h1v6h-1zM138 195h5v5h-5zM148 196h1v2h-1zM146 196h5v2h-5zM156 191h1v8h-1zM154 197h5v2h-5zM164 195h1v15h-1zM162 197h5v13h-5zM172 204h1v17h-1zM170 208h5v9h-5zM180 203h1v18h-1zM178 205h5v11h-5zM188 197h1v15h-1zM186 205h5v1h-5zM196 203h1v19h-1zM194 205h5v13h-5zM204 207h1v12h-1zM202 212h5v6h-5zM212 205h1v10h-1zM210 209h5v3h-5zM220 144h1v70h-1zM218 151h5v58h-5zM228 141h1v32h-1zM226 144h5v8h-5zM236 132h1v19h-1zM234 137h5v7h-5zM244 123h1v18h-1zM242 124h5v14h-5zM252 107h1v21h-1zM250 108h5v17h-5zM260 106h1v10h-1zM258 108h5v7h-5zM268 97h1v19h-1zM266 100h5v16h-5zM276 99h1v10h-1zM274 100h5v1h-5zM284 100h1v13h-1zM282 100h5v13h-5zM292 111h1v4h-1zM290 113h5v1h-5zM300 106h1v9h-1zM298 113h5v2h-5zM308 103h1v12h-1zM306 111h5v3h-5zM316 107h1v11h-1zM314 111h5v4h-5zM324 105h1v11h-1zM322 110h5v5h-5zM332 109h1v10h-1zM330 110h5v1h-5zM340 104h1v13h-1zM338 110h5v1h-5zM348 105h1v11h-1zM346 110h5v3h-5zM356 109h1v7h-1zM354 111h5v5h-5zM364 80h1v36h-1zM362 82h5v33h-5zM372 65h1v20h-1zM370 80h5v2h-5zM380 69h1v23h-1zM378 73h5v8h-5zM388 66h1v26h-1zM386 74h5v14h-5zM396 76h1v15h-1zM394 84h5v4h-5zM404 75h1v22h-1zM402 84h5v6h-5zM412 73h1v18h-1zM410 73h5v17h-5zM420 60h1v18h-1zM418 70h5v4h-5zM428 66h1v39h-1zM426 70h5v18h-5zM436 73h1v20h-1zM434 81h5v7h-5zM444 79h1v17h-1zM442 81h5v6h-5zM452 80h1v12h-1zM450 86h5v4h-5zM460 81h1v11h-1zM458 85h5v5h-5zM468 85h1v15h-1zM466 86h5v12h-5zM476 93h1v7h-1zM474 95h5v4h-5zM484 91h1v6h-1zM482 95h5v1h-5zM492 89h1v8h-1zM490 92h5v4h-5zM500 89h1v11h-1zM498 92h5v1h-5zM508 78h1v15h-1zM506 80h5v13h-5zM516 73h1v13h-1zM514 73h5v8h-5zM524 68h1v9h-1zM522 70h5v5h-5zM532 67h1v8h-1zM530 70h5v1h-5zM540 59h1v12h-1zM538 64h5v7h-5zM548 62h1v15h-1zM546 64h5v12h-5zM556 72h1v19h-1zM554 75h5v5h-5zM564 70h1v16h-1zM562 77h5v4h-5zM572 76h1v16h-1zM570 77h5v14h-5zM580 86h1v10h-1zM578 90h5v2h-5zM588 89h1v14h-1zM586 93h5v6h-5zM596 92h1v20h-1zM594 98h5v11h-5zM604 94h1v29h-1zM602 108h5v8h-5zM612 100h1v26h-1zM610 111h5v5h-5zM620 110h1v24h-1zM618 111h5v11h-5zM628 118h1v35h-1zM626 121h5v25h-5zM636 145h1v21h-1zM634 145h5v16h-5zM644 149h1v13h-1zM642 151h5v10h-5zM652 141h1v15h-1zM650 144h5v8h-5zM660 141h1v7h-1zM658 144h5v2h-5zM668 143h1v6h-1zM666 144h5v2h-5zM676 143h1v6h-1zM674 145h5v2h-5z"/>
<path fill="#000000" d="M11 242h3v9h-3zM43 240h3v20h-3zM51 213h3v26h-3zM67 206h3v15h-3zM99 205h3v3h-3zM115 201h3v6h-3zM131 200h3v1h-3zM139 196h3v3h-3zM179 206h3v9h-3zM203 213h3v4h-3zM219 152h3v56h-3zM227 145h3v6h-3zM235 138h3v5h-3zM243 125h3v12h-3zM251 109h3v15h-3zM267 101h3v14h-3zM307 112h3v1h-3zM323 111h3v3h-3zM363 83h3v31h-3zM379 74h3v6h-3zM395 85h3v2h-3zM411 74h3v15h-3zM419 71h3v2h-3zM435 82h3v5h-3zM459 86h3v3h-3zM475 96h3v2h-3zM491 93h3v2h-3zM507 81h3v11h-3zM515 74h3v6h-3zM523 71h3v3h-3zM539 65h3v5h-3zM563 78h3v2h-3zM611 112h3v3h-3zM643 152h3v8h-3zM651 145h3v6h-3z"/>
<path fill="#ffffff" d="M19 242h3v8h-3zM27 251h3v6h-3zM35 258h3v2h-3zM59 213h3v8h-3zM83 206h3v2h-3zM163 198h3v11h-3zM171 209h3v7h-3zM195 206h3v11h-3zM211 210h3v1h-3zM259 109h3v5h-3zM283 101h3v11h-3zM315 112h3v2h-3zM347 111h3v1h-3zM355 112h3v3h-3zM387 75h3v12h-3zM403 85h3v4h-3zM427 71h3v16h-3zM443 82h3v4h-3zM451 87h3v2h-3zM467 87h3v10h-3zM547 65h3v10h-3zM555 76h3v3h-3zM571 78h3v12h-3zM587 94h3v4h-3zM595 99h3v9h-3zM603 109h3v6h-3zM619 112h3v9h-3zM627 122h3v23h-3zM635 146h3v14h-3z"/>
</g>
<g clip-path="url(#cp1)">
<polygon points="115.70,206.90 113.89,210.64 109.41,210.20 112.07,213.50 109.41,216.80 113.89,216.36 115.70,220.10 117.52,216.36 121.99,216.80 119.33,213.50 121.99,210.20 117.52,210.64" fill="#ee86ee"/>
<polygon points="124.10,210.80 133.70,220.70 133.70,224.20 125.60,216.10 125.60,232.80 122.60,232.80 122.60,216.10 114.50,224.20 114.50,220.70" fill="#ee86ee"/>
<polygon points="227.80,170.50 225.99,174.24 221.51,173.80 224.17,177.10 221.51,180.40 225.99,179.96 227.80,183.70 229.62,179.96 234.09,180.40 231.43,177.10 234.09,173.80 229.62,174.24" fill="#ee86ee"/>
<polygon points="236.30,150.00 245.90,159.90 245.90,163.40 237.80,155.30 237.80,172.00 234.80,172.00 234.80,155.30 226.70,163.40 226.70,159.90" fill="#ee86ee"/>
<polygon points="339.70,109.20 337.88,112.94 333.41,112.50 336.07,115.80 333.41,119.10 337.88,118.66 339.70,122.40 341.51,118.66 345.99,119.10 343.33,115.80 345.99,112.50 341.51,112.94" fill="#ee86ee"/>
<polygon points="348.30,114.20 357.90,124.10 357.90,127.60 349.80,119.50 349.80,136.20 346.80,136.20 346.80,119.50 338.70,127.60 338.70,124.10" fill="#ee86ee"/>
<polygon points="563.80,56.60 561.98,60.34 557.51,59.90 560.17,63.20 557.51,66.50 561.98,66.06 563.80,69.80 565.61,66.06 570.09,66.50 567.43,63.20 570.09,59.90 565.62,60.34" fill="#dcdcdc"/>
<polygon points="572.20,59.30 581.80,49.40 581.80,45.90 573.70,54.00 573.70,37.30 570.70,37.30 570.70,54.00 562.60,45.90 562.60,49.40" fill="#dcdcdc"/>
</g>
<polyline clip-path="url(#cp2)" points="4.5,312.0 12.5,319.0 20.5,327.0 28.5,340.5 36.5,354.9 44.5,356.3 52.5,354.3 60.5,346.5 68.5,329.3 76.5,316.3 84.5,314.0 92.5,313.4 100.5,311.8 108.5,313.2 116.5,312.3 124.5,310.7 132.5,309.0 140.5,305.8 148.5,302.5 156.5,301.7 164.5,306.0 172.5,311.4 180.5,315.2 188.5,318.5 196.5,326.0 204.5,327.7 212.5,327.9 220.5,324.4 228.5,321.7 236.5,313.0 244.5,308.1 252.5,300.0 260.5,299.7 268.5,299.7 276.5,299.7 284.5,301.8 292.5,304.9 300.5,307.6 308.5,309.8 316.5,312.0 324.5,312.0 332.5,311.2 340.5,309.4 348.5,309.4 356.5,309.4 364.5,307.9 372.5,307.3 380.5,306.5 388.5,309.2 396.5,309.6 404.5,316.7 412.5,317.9 420.5,324.1 428.5,329.7 436.5,332.4 444.5,334.0 452.5,343.9 460.5,351.9 468.5,355.4 476.5,360.7 484.5,365.6 492.5,367.1 500.5,370.0 508.5,363.8 516.5,354.5 524.5,345.2 532.5,337.2 540.5,324.2 548.5,323.8 556.5,330.0 564.5,335.0 572.5,346.5 580.5,361.6 588.5,376.7 596.5,387.7 604.5,401.2 612.5,402.2 620.5,404.2 628.5,406.4 636.5,407.7 644.5,407.7 652.5,407.0 660.5,405.6 668.5,402.1 676.5,399.7 684.5,397.0" fill="none" stroke="#20b2aa" stroke-width="2" stroke-linejoin="miter" shape-rendering="crispEdges"/>
<polyline clip-path="url(#cp2)" points="4.5,307.4 12.5,311.7 20.5,316.0 28.5,323.4 36.5,332.6 44.5,340.8 52.5,346.7 60.5,350.2 68.5,348.7 76.5,340.8 84.5,331.0 92.5,324.5 100.5,317.7 108.5,314.3 116.5,312.8 124.5,311.8 132.5,310.7 140.5,309.6 148.5,306.9 156.5,305.6 164.5,305.7 172.5,306.2 180.5,308.1 188.5,311.4 196.5,316.3 204.5,320.1 212.5,323.3 220.5,324.8 228.5,324.8 236.5,322.8 244.5,319.5 252.5,314.7 260.5,309.8 268.5,304.3 276.5,301.6 284.5,300.7 292.5,301.0 300.5,303.2 308.5,304.9 316.5,307.6 324.5,309.8 332.5,310.3 340.5,310.8 348.5,310.8 356.5,310.8 364.5,310.1 372.5,308.7 380.5,307.6 388.5,307.6 396.5,308.3 404.5,309.3 412.5,311.4 420.5,315.5 428.5,319.2 436.5,322.9 444.5,326.6 452.5,331.9 460.5,337.7 468.5,342.7 476.5,349.0 484.5,354.5 492.5,360.1 500.5,364.4 508.5,364.7 516.5,364.4 524.5,360.1 532.5,354.5 540.5,344.6 548.5,337.2 556.5,332.3 564.5,330.7 572.5,332.0 580.5,341.0 588.5,350.0 596.5,361.6 604.5,374.2 612.5,386.0 620.5,395.0 628.5,401.0 636.5,404.5 644.5,405.1 652.5,406.2 660.5,407.0 668.5,406.4 676.5,404.8 684.5,402.5" fill="none" stroke="#ff0000" stroke-width="2" stroke-linejoin="miter" shape-rendering="crispEdges"/>
<polyline clip-path="url(#cp3)" points="4.5,491.5 12.5,493.6 20.5,495.7 28.5,499.8 36.5,505.7 44.5,507.1 52.5,507.4 60.5,508.7 68.5,505.7 76.5,501.2 84.5,495.5 92.5,490.2 100.5,485.0 108.5,479.5 116.5,474.3 124.5,469.2 132.5,465.5 140.5,462.7 148.5,458.9 156.5,454.0 164.5,452.3 172.5,450.1 180.5,449.6 188.5,447.2 196.5,446.1 204.5,446.1 212.5,446.1 220.5,445.2 228.5,444.1 236.5,443.9 244.5,443.9 252.5,443.9 260.5,443.9 268.5,443.9 276.5,443.9 284.5,443.9 292.5,443.9 300.5,443.9 308.5,443.9 316.5,443.9 324.5,443.9 332.5,443.9 340.5,443.9 348.5,442.8 356.5,443.9 364.5,443.9 372.5,443.0 380.5,443.0 388.5,443.0 396.5,443.0 404.5,441.7 412.5,441.7 420.5,441.7 428.5,443.0 436.5,443.0 444.5,443.0 452.5,443.0 460.5,443.0 468.5,443.9 476.5,443.9 484.5,443.9 492.5,445.0 500.5,445.0 508.5,445.0 516.5,445.0 524.5,443.9 532.5,443.9 540.5,443.9 548.5,443.9 556.5,444.0 564.5,444.5 572.5,446.3 580.5,447.7 588.5,449.0 596.5,452.5 604.5,457.3 612.5,460.5 620.5,465.6 628.5,471.8 636.5,477.7 644.5,484.4 652.5,490.0 660.5,495.4 668.5,499.6 676.5,503.7 684.5,507.8" fill="none" stroke="#ffff00" stroke-width="2" stroke-linejoin="miter" shape-rendering="crispEdges"/>
<polyline clip-path="url(#cp3)" points="4.5,449.3 12.5,449.3 20.5,449.3 28.5,453.5 36.5,462.7 44.5,462.7 52.5,462.7 60.5,462.7 68.5,461.3 76.5,459.7 84.5,458.9 92.5,458.9 100.5,457.5 108.5,456.8 116.5,456.4 124.5,455.0 132.5,452.7 140.5,451.3 148.5,449.0 156.5,447.2 164.5,446.8 172.5,450.7 180.5,450.9 188.5,451.2 196.5,458.0 204.5,463.7 212.5,467.8 220.5,467.8 228.5,467.5 236.5,467.0 244.5,467.0 252.5,467.0 260.5,467.0 268.5,465.9 276.5,462.1 284.5,459.9 292.5,457.2 300.5,456.6 308.5,452.8 316.5,451.7 324.5,451.5 332.5,449.6 340.5,449.0 348.5,449.0 356.5,450.7 364.5,450.7 372.5,449.6 380.5,449.0 388.5,449.0 396.5,449.0 404.5,449.0 412.5,449.0 420.5,449.0 428.5,450.9 436.5,450.9 444.5,452.8 452.5,455.0 460.5,455.0 468.5,457.0 476.5,459.6 484.5,460.4 492.5,466.4 500.5,471.3 508.5,473.5 516.5,474.0 524.5,474.0 532.5,474.0 540.5,474.0 548.5,476.2 556.5,480.0 564.5,483.4 572.5,489.6 580.5,492.4 588.5,495.1 596.5,502.7 604.5,507.5 612.5,514.5 620.5,515.2 628.5,516.0 636.5,521.5 644.5,525.0 652.5,528.0 660.5,531.2 668.5,534.6 676.5,537.0 684.5,539.5" fill="none" stroke="#00ffff" stroke-width="2" stroke-linejoin="miter" shape-rendering="crispEdges"/>
<path shape-rendering="crispEdges" fill="#cccccc" d="M13 321h3v1h-3zM19 321h3v1h-3zM25 321h3v1h-3zM31 321h3v1h-3zM37 321h3v1h-3zM43 321h3v1h-3zM49 321h3v1h-3zM55 321h3v1h-3zM61 321h3v1h-3zM67 321h3v1h-3zM73 321h3v1h-3zM79 321h3v1h-3zM85 321h3v1h-3zM91 321h3v1h-3zM97 321h3v1h-3zM103 321h3v1h-3zM109 321h3v1h-3zM115 321h3v1h-3zM121 321h3v1h-3zM127 321h3v1h-3zM133 321h3v1h-3zM139 321h3v1h-3zM145 321h3v1h-3zM151 321h3v1h-3zM157 321h3v1h-3zM163 321h3v1h-3zM169 321h3v1h-3zM175 321h3v1h-3zM181 321h3v1h-3zM187 321h3v1h-3zM193 321h3v1h-3zM199 321h3v1h-3zM205 321h3v1h-3zM211 321h3v1h-3zM217 321h3v1h-3zM223 321h3v1h-3zM229 321h3v1h-3zM235 321h3v1h-3zM241 321h3v1h-3zM247 321h3v1h-3zM253 321h3v1h-3zM259 321h3v1h-3zM265 321h3v1h-3zM271 321h3v1h-3zM277 321h3v1h-3zM283 321h3v1h-3zM289 321h3v1h-3zM295 321h3v1h-3zM301 321h3v1h-3zM307 321h3v1h-3zM313 321h3v1h-3zM319 321h3v1h-3zM325 321h3v1h-3zM331 321h3v1h-3zM337 321h3v1h-3zM343 321h3v1h-3zM349 321h3v1h-3zM355 321h3v1h-3zM361 321h3v1h-3zM367 321h3v1h-3zM373 321h3v1h-3zM379 321h3v1h-3zM385 321h3v1h-3zM391 321h3v1h-3zM397 321h3v1h-3zM403 321h3v1h-3zM409 321h3v1h-3zM415 321h3v1h-3zM421 321h3v1h-3zM427 321h3v1h-3zM433 321h3v1h-3zM439 321h3v1h-3zM445 321h3v1h-3zM451 321h3v1h-3zM457 321h3v1h-3zM463 321h3v1h-3zM469 321h3v1h-3zM475 321h3v1h-3zM481 321h3v1h-3zM487 321h3v1h-3zM493 321h3v1h-3zM499 321h3v1h-3zM505 321h3v1h-3zM511 321h3v1h-3zM517 321h3v1h-3zM523 321h3v1h-3zM529 321h3v1h-3zM535 321h3v1h-3zM541 321h3v1h-3zM547 321h3v1h-3zM553 321h3v1h-3zM559 321h3v1h-3zM565 321h3v1h-3zM571 321h3v1h-3zM577 321h3v1h-3zM583 321h3v1h-3zM589 321h3v1h-3zM595 321h3v1h-3zM601 321h3v1h-3zM607 321h3v1h-3zM613 321h3v1h-3zM619 321h3v1h-3zM625 321h3v1h-3zM631 321h3v1h-3zM637 321h3v1h-3zM643 321h3v1h-3zM649 321h3v1h-3zM655 321h3v1h-3zM661 321h3v1h-3zM667 321h3v1h-3zM673 321h3v1h-3zM13 396h3v1h-3zM19 396h3v1h-3zM25 396h3v1h-3zM31 396h3v1h-3zM37 396h3v1h-3zM43 396h3v1h-3zM49 396h3v1h-3zM55 396h3v1h-3zM61 396h3v1h-3zM67 396h3v1h-3zM73 396h3v1h-3zM79 396h3v1h-3zM85 396h3v1h-3zM91 396h3v1h-3zM97 396h3v1h-3zM103 396h3v1h-3zM109 396h3v1h-3zM115 396h3v1h-3zM121 396h3v1h-3zM127 396h3v1h-3zM133 396h3v1h-3zM139 396h3v1h-3zM145 396h3v1h-3zM151 396h3v1h-3zM157 396h3v1h-3zM163 396h3v1h-3zM169 396h3v1h-3zM175 396h3v1h-3zM181 396h3v1h-3zM187 396h3v1h-3zM193 396h3v1h-3zM199 396h3v1h-3zM205 396h3v1h-3zM211 396h3v1h-3zM217 396h3v1h-3zM223 396h3v1h-3zM229 396h3v1h-3zM235 396h3v1h-3zM241 396h3v1h-3zM247 396h3v1h-3zM253 396h3v1h-3zM259 396h3v1h-3zM265 396h3v1h-3zM271 396h3v1h-3zM277 396h3v1h-3zM283 396h3v1h-3zM289 396h3v1h-3zM295 396h3v1h-3zM301 396h3v1h-3zM307 396h3v1h-3zM313 396h3v1h-3zM319 396h3v1h-3zM325 396h3v1h-3zM331 396h3v1h-3zM337 396h3v1h-3zM343 396h3v1h-3zM349 396h3v1h-3zM355 396h3v1h-3zM361 396h3v1h-3zM367 396h3v1h-3zM373 396h3v1h-3zM379 396h3v1h-3zM385 396h3v1h-3zM391 396h3v1h-3zM397 396h3v1h-3zM403 396h3v1h-3zM409 396h3v1h-3zM415 396h3v1h-3zM421 396h3v1h-3zM427 396h3v1h-3zM433 396h3v1h-3zM439 396h3v1h-3zM445 396h3v1h-3zM451 396h3v1h-3zM457 396h3v1h-3zM463 396h3v1h-3zM469 396h3v1h-3zM475 396h3v1h-3zM481 396h3v1h-3zM487 396h3v1h-3zM493 396h3v1h-3zM499 396h3v1h-3zM505 396h3v1h-3zM511 396h3v1h-3zM517 396h3v1h-3zM523 396h3v1h-3zM529 396h3v1h-3zM535 396h3v1h-3zM541 396h3v1h-3zM547 396h3v1h-3zM553 396h3v1h-3zM559 396h3v1h-3zM565 396h3v1h-3zM571 396h3v1h-3zM577 396h3v1h-3zM583 396h3v1h-3zM589 396h3v1h-3zM595 396h3v1h-3zM601 396h3v1h-3zM607 396h3v1h-3zM613 396h3v1h-3zM619 396h3v1h-3zM625 396h3v1h-3zM631 396h3v1h-3zM637 396h3v1h-3zM643 396h3v1h-3zM649 396h3v1h-3zM655 396h3v1h-3zM661 396h3v1h-3zM667 396h3v1h-3zM673 396h3v1h-3zM13 437h3v1h-3zM19 437h3v1h-3zM25 437h3v1h-3zM31 437h3v1h-3zM37 437h3v1h-3zM43 437h3v1h-3zM49 437h3v1h-3zM55 437h3v1h-3zM61 437h3v1h-3zM67 437h3v1h-3zM73 437h3v1h-3zM79 437h3v1h-3zM85 437h3v1h-3zM91 437h3v1h-3zM97 437h3v1h-3zM103 437h3v1h-3zM109 437h3v1h-3zM115 437h3v1h-3zM121 437h3v1h-3zM127 437h3v1h-3zM133 437h3v1h-3zM139 437h3v1h-3zM145 437h3v1h-3zM151 437h3v1h-3zM157 437h3v1h-3zM163 437h3v1h-3zM169 437h3v1h-3zM175 437h3v1h-3zM181 437h3v1h-3zM187 437h3v1h-3zM193 437h3v1h-3zM199 437h3v1h-3zM205 437h3v1h-3zM211 437h3v1h-3zM217 437h3v1h-3zM223 437h3v1h-3zM229 437h3v1h-3zM235 437h3v1h-3zM241 437h3v1h-3zM247 437h3v1h-3zM253 437h3v1h-3zM259 437h3v1h-3zM265 437h3v1h-3zM271 437h3v1h-3zM277 437h3v1h-3zM283 437h3v1h-3zM289 437h3v1h-3zM295 437h3v1h-3zM301 437h3v1h-3zM307 437h3v1h-3zM313 437h3v1h-3zM319 437h3v1h-3zM325 437h3v1h-3zM331 437h3v1h-3zM337 437h3v1h-3zM343 437h3v1h-3zM349 437h3v1h-3zM355 437h3v1h-3zM361 437h3v1h-3zM367 437h3v1h-3zM373 437h3v1h-3zM379 437h3v1h-3zM385 437h3v1h-3zM391 437h3v1h-3zM397 437h3v1h-3zM403 437h3v1h-3zM409 437h3v1h-3zM415 437h3v1h-3zM421 437h3v1h-3zM427 437h3v1h-3zM433 437h3v1h-3zM439 437h3v1h-3zM445 437h3v1h-3zM451 437h3v1h-3zM457 437h3v1h-3zM463 437h3v1h-3zM469 437h3v1h-3zM475 437h3v1h-3zM481 437h3v1h-3zM487 437h3v1h-3zM493 437h3v1h-3zM499 437h3v1h-3zM505 437h3v1h-3zM511 437h3v1h-3zM517 437h3v1h-3zM523 437h3v1h-3zM529 437h3v1h-3zM535 437h3v1h-3zM541 437h3v1h-3zM547 437h3v1h-3zM553 437h3v1h-3zM559 437h3v1h-3zM565 437h3v1h-3zM571 437h3v1h-3zM577 437h3v1h-3zM583 437h3v1h-3zM589 437h3v1h-3zM595 437h3v1h-3zM601 437h3v1h-3zM607 437h3v1h-3zM613 437h3v1h-3zM619 437h3v1h-3zM625 437h3v1h-3zM631 437h3v1h-3zM637 437h3v1h-3zM643 437h3v1h-3zM649 437h3v1h-3zM655 437h3v1h-3zM661 437h3v1h-3zM667 437h3v1h-3zM673 437h3v1h-3zM13 448h3v1h-3zM19 448h3v1h-3zM25 448h3v1h-3zM31 448h3v1h-3zM37 448h3v1h-3zM43 448h3v1h-3zM49 448h3v1h-3zM55 448h3v1h-3zM61 448h3v1h-3zM67 448h3v1h-3zM73 448h3v1h-3zM79 448h3v1h-3zM85 448h3v1h-3zM91 448h3v1h-3zM97 448h3v1h-3zM103 448h3v1h-3zM109 448h3v1h-3zM115 448h3v1h-3zM121 448h3v1h-3zM127 448h3v1h-3zM133 448h3v1h-3zM139 448h3v1h-3zM145 448h3v1h-3zM151 448h3v1h-3zM157 448h3v1h-3zM163 448h3v1h-3zM169 448h3v1h-3zM175 448h3v1h-3zM181 448h3v1h-3zM187 448h3v1h-3zM193 448h3v1h-3zM199 448h3v1h-3zM205 448h3v1h-3zM211 448h3v1h-3zM217 448h3v1h-3zM223 448h3v1h-3zM229 448h3v1h-3zM235 448h3v1h-3zM241 448h3v1h-3zM247 448h3v1h-3zM253 448h3v1h-3zM259 448h3v1h-3zM265 448h3v1h-3zM271 448h3v1h-3zM277 448h3v1h-3zM283 448h3v1h-3zM289 448h3v1h-3zM295 448h3v1h-3zM301 448h3v1h-3zM307 448h3v1h-3zM313 448h3v1h-3zM319 448h3v1h-3zM325 448h3v1h-3zM331 448h3v1h-3zM337 448h3v1h-3zM343 448h3v1h-3zM349 448h3v1h-3zM355 448h3v1h-3zM361 448h3v1h-3zM367 448h3v1h-3zM373 448h3v1h-3zM379 448h3v1h-3zM385 448h3v1h-3zM391 448h3v1h-3zM397 448h3v1h-3zM403 448h3v1h-3zM409 448h3v1h-3zM415 448h3v1h-3zM421 448h3v1h-3zM427 448h3v1h-3zM433 448h3v1h-3zM439 448h3v1h-3zM445 448h3v1h-3zM451 448h3v1h-3zM457 448h3v1h-3zM463 448h3v1h-3zM469 448h3v1h-3zM475 448h3v1h-3zM481 448h3v1h-3zM487 448h3v1h-3zM493 448h3v1h-3zM499 448h3v1h-3zM505 448h3v1h-3zM511 448h3v1h-3zM517 448h3v1h-3zM523 448h3v1h-3zM529 448h3v1h-3zM535 448h3v1h-3zM541 448h3v1h-3zM547 448h3v1h-3zM553 448h3v1h-3zM559 448h3v1h-3zM565 448h3v1h-3zM571 448h3v1h-3zM577 448h3v1h-3zM583 448h3v1h-3zM589 448h3v1h-3zM595 448h3v1h-3zM601 448h3v1h-3zM607 448h3v1h-3zM613 448h3v1h-3zM619 448h3v1h-3zM625 448h3v1h-3zM631 448h3v1h-3zM637 448h3v1h-3zM643 448h3v1h-3zM649 448h3v1h-3zM655 448h3v1h-3zM661 448h3v1h-3zM667 448h3v1h-3zM673 448h3v1h-3zM13 466h3v1h-3zM19 466h3v1h-3zM25 466h3v1h-3zM31 466h3v1h-3zM37 466h3v1h-3zM43 466h3v1h-3zM49 466h3v1h-3zM55 466h3v1h-3zM61 466h3v1h-3zM67 466h3v1h-3zM73 466h3v1h-3zM79 466h3v1h-3zM85 466h3v1h-3zM91 466h3v1h-3zM97 466h3v1h-3zM103 466h3v1h-3zM109 466h3v1h-3zM115 466h3v1h-3zM121 466h3v1h-3zM127 466h3v1h-3zM133 466h3v1h-3zM139 466h3v1h-3zM145 466h3v1h-3zM151 466h3v1h-3zM157 466h3v1h-3zM163 466h3v1h-3zM169 466h3v1h-3zM175 466h3v1h-3zM181 466h3v1h-3zM187 466h3v1h-3zM193 466h3v1h-3zM199 466h3v1h-3zM205 466h3v1h-3zM211 466h3v1h-3zM217 466h3v1h-3zM223 466h3v1h-3zM229 466h3v1h-3zM235 466h3v1h-3zM241 466h3v1h-3zM247 466h3v1h-3zM253 466h3v1h-3zM259 466h3v1h-3zM265 466h3v1h-3zM271 466h3v1h-3zM277 466h3v1h-3zM283 466h3v1h-3zM289 466h3v1h-3zM295 466h3v1h-3zM301 466h3v1h-3zM307 466h3v1h-3zM313 466h3v1h-3zM319 466h3v1h-3zM325 466h3v1h-3zM331 466h3v1h-3zM337 466h3v1h-3zM343 466h3v1h-3zM349 466h3v1h-3zM355 466h3v1h-3zM361 466h3v1h-3zM367 466h3v1h-3zM373 466h3v1h-3zM379 466h3v1h-3zM385 466h3v1h-3zM391 466h3v1h-3zM397 466h3v1h-3zM403 466h3v1h-3zM409 466h3v1h-3zM415 466h3v1h-3zM421 466h3v1h-3zM427 466h3v1h-3zM433 466h3v1h-3zM439 466h3v1h-3zM445 466h3v1h-3zM451 466h3v1h-3zM457 466h3v1h-3zM463 466h3v1h-3zM469 466h3v1h-3zM475 466h3v1h-3zM481 466h3v1h-3zM487 466h3v1h-3zM493 466h3v1h-3zM499 466h3v1h-3zM505 466h3v1h-3zM511 466h3v1h-3zM517 466h3v1h-3zM523 466h3v1h-3zM529 466h3v1h-3zM535 466h3v1h-3zM541 466h3v1h-3zM547 466h3v1h-3zM553 466h3v1h-3zM559 466h3v1h-3zM565 466h3v1h-3zM571 466h3v1h-3zM577 466h3v1h-3zM583 466h3v1h-3zM589 466h3v1h-3zM595 466h3v1h-3zM601 466h3v1h-3zM607 466h3v1h-3zM613 466h3v1h-3zM619 466h3v1h-3zM625 466h3v1h-3zM631 466h3v1h-3zM637 466h3v1h-3zM643 466h3v1h-3zM649 466h3v1h-3zM655 466h3v1h-3zM661 466h3v1h-3zM667 466h3v1h-3zM673 466h3v1h-3zM13 523h3v1h-3zM19 523h3v1h-3zM25 523h3v1h-3zM31 523h3v1h-3zM37 523h3v1h-3zM43 523h3v1h-3zM49 523h3v1h-3zM55 523h3v1h-3zM61 523h3v1h-3zM67 523h3v1h-3zM73 523h3v1h-3zM79 523h3v1h-3zM85 523h3v1h-3zM91 523h3v1h-3zM97 523h3v1h-3zM103 523h3v1h-3zM109 523h3v1h-3zM115 523h3v1h-3zM121 523h3v1h-3zM127 523h3v1h-3zM133 523h3v1h-3zM139 523h3v1h-3zM145 523h3v1h-3zM151 523h3v1h-3zM157 523h3v1h-3zM163 523h3v1h-3zM169 523h3v1h-3zM175 523h3v1h-3zM181 523h3v1h-3zM187 523h3v1h-3zM193 523h3v1h-3zM199 523h3v1h-3zM205 523h3v1h-3zM211 523h3v1h-3zM217 523h3v1h-3zM223 523h3v1h-3zM229 523h3v1h-3zM235 523h3v1h-3zM241 523h3v1h-3zM247 523h3v1h-3zM253 523h3v1h-3zM259 523h3v1h-3zM265 523h3v1h-3zM271 523h3v1h-3zM277 523h3v1h-3zM283 523h3v1h-3zM289 523h3v1h-3zM295 523h3v1h-3zM301 523h3v1h-3zM307 523h3v1h-3zM313 523h3v1h-3zM319 523h3v1h-3zM325 523h3v1h-3zM331 523h3v1h-3zM337 523h3v1h-3zM343 523h3v1h-3zM349 523h3v1h-3zM355 523h3v1h-3zM361 523h3v1h-3zM367 523h3v1h-3zM373 523h3v1h-3zM379 523h3v1h-3zM385 523h3v1h-3zM391 523h3v1h-3zM397 523h3v1h-3zM403 523h3v1h-3zM409 523h3v1h-3zM415 523h3v1h-3zM421 523h3v1h-3zM427 523h3v1h-3zM433 523h3v1h-3zM439 523h3v1h-3zM445 523h3v1h-3zM451 523h3v1h-3zM457 523h3v1h-3zM463 523h3v1h-3zM469 523h3v1h-3zM475 523h3v1h-3zM481 523h3v1h-3zM487 523h3v1h-3zM493 523h3v1h-3zM499 523h3v1h-3zM505 523h3v1h-3zM511 523h3v1h-3zM517 523h3v1h-3zM523 523h3v1h-3zM529 523h3v1h-3zM535 523h3v1h-3zM541 523h3v1h-3zM547 523h3v1h-3zM553 523h3v1h-3zM559 523h3v1h-3zM565 523h3v1h-3zM571 523h3v1h-3zM577 523h3v1h-3zM583 523h3v1h-3zM589 523h3v1h-3zM595 523h3v1h-3zM601 523h3v1h-3zM607 523h3v1h-3zM613 523h3v1h-3zM619 523h3v1h-3zM625 523h3v1h-3zM631 523h3v1h-3zM637 523h3v1h-3zM643 523h3v1h-3zM649 523h3v1h-3zM655 523h3v1h-3zM661 523h3v1h-3zM667 523h3v1h-3zM673 523h3v1h-3zM13 540h3v1h-3zM19 540h3v1h-3zM25 540h3v1h-3zM31 540h3v1h-3zM37 540h3v1h-3zM43 540h3v1h-3zM49 540h3v1h-3zM55 540h3v1h-3zM61 540h3v1h-3zM67 540h3v1h-3zM73 540h3v1h-3zM79 540h3v1h-3zM85 540h3v1h-3zM91 540h3v1h-3zM97 540h3v1h-3zM103 540h3v1h-3zM109 540h3v1h-3zM115 540h3v1h-3zM121 540h3v1h-3zM127 540h3v1h-3zM133 540h3v1h-3zM139 540h3v1h-3zM145 540h3v1h-3zM151 540h3v1h-3zM157 540h3v1h-3zM163 540h3v1h-3zM169 540h3v1h-3zM175 540h3v1h-3zM181 540h3v1h-3zM187 540h3v1h-3zM193 540h3v1h-3zM199 540h3v1h-3zM205 540h3v1h-3zM211 540h3v1h-3zM217 540h3v1h-3zM223 540h3v1h-3zM229 540h3v1h-3zM235 540h3v1h-3zM241 540h3v1h-3zM247 540h3v1h-3zM253 540h3v1h-3zM259 540h3v1h-3zM265 540h3v1h-3zM271 540h3v1h-3zM277 540h3v1h-3zM283 540h3v1h-3zM289 540h3v1h-3zM295 540h3v1h-3zM301 540h3v1h-3zM307 540h3v1h-3zM313 540h3v1h-3zM319 540h3v1h-3zM325 540h3v1h-3zM331 540h3v1h-3zM337 540h3v1h-3zM343 540h3v1h-3zM349 540h3v1h-3zM355 540h3v1h-3zM361 540h3v1h-3zM367 540h3v1h-3zM373 540h3v1h-3zM379 540h3v1h-3zM385 540h3v1h-3zM391 540h3v1h-3zM397 540h3v1h-3zM403 540h3v1h-3zM409 540h3v1h-3zM415 540h3v1h-3zM421 540h3v1h-3zM427 540h3v1h-3zM433 540h3v1h-3zM439 540h3v1h-3zM445 540h3v1h-3zM451 540h3v1h-3zM457 540h3v1h-3zM463 540h3v1h-3zM469 540h3v1h-3zM475 540h3v1h-3zM481 540h3v1h-3zM487 540h3v1h-3zM493 540h3v1h-3zM499 540h3v1h-3zM505 540h3v1h-3zM511 540h3v1h-3zM517 540h3v1h-3zM523 540h3v1h-3zM529 540h3v1h-3zM535 540h3v1h-3zM541 540h3v1h-3zM547 540h3v1h-3zM553 540h3v1h-3zM559 540h3v1h-3zM565 540h3v1h-3zM571 540h3v1h-3zM577 540h3v1h-3zM583 540h3v1h-3zM589 540h3v1h-3zM595 540h3v1h-3zM601 540h3v1h-3zM607 540h3v1h-3zM613 540h3v1h-3zM619 540h3v1h-3zM625 540h3v1h-3zM631 540h3v1h-3zM637 540h3v1h-3zM643 540h3v1h-3zM649 540h3v1h-3zM655 540h3v1h-3zM661 540h3v1h-3zM667 540h3v1h-3zM673 540h3v1h-3z"/>
<polygon points="12,547 17,552 12,552" fill="#8090a8" shape-rendering="crispEdges"/>
<polygon points="15,41 22,41 18.5,45" fill="#ffffff"/>
<text x="27.4" y="46" font-size="10" fill="#ffffff" textLength="200.5" lengthAdjust="spacingAndGlyphs">EURUSD,H1&#160;&#160;0.96334 0.96405 0.96276 0.96339</text>
<text x="16" y="307" font-size="10" fill="#ffffff" textLength="128" lengthAdjust="spacingAndGlyphs">Stoch(21,5,5) 34.6198 34.4023</text>
<text x="16" y="437" font-size="10" fill="#ffffff" textLength="52" lengthAdjust="spacingAndGlyphs">R1(26) -40.0</text>
<text x="73" y="437" font-size="10" fill="#ffffff" textLength="51" lengthAdjust="spacingAndGlyphs">R1(52) -91.5</text>
<text x="685" y="62" font-size="10" fill="#ffffff" textLength="32" lengthAdjust="spacingAndGlyphs">1.14830</text>
<text x="685" y="95" font-size="10" fill="#ffffff" textLength="32" lengthAdjust="spacingAndGlyphs">1.14570</text>
<text x="685" y="128" font-size="10" fill="#ffffff" textLength="32" lengthAdjust="spacingAndGlyphs">1.14305</text>
<text x="685" y="161" font-size="10" fill="#ffffff" textLength="32" lengthAdjust="spacingAndGlyphs">1.14045</text>
<text x="685" y="194" font-size="10" fill="#ffffff" textLength="32" lengthAdjust="spacingAndGlyphs">1.13785</text>
<text x="685" y="227" font-size="10" fill="#ffffff" textLength="32" lengthAdjust="spacingAndGlyphs">1.13520</text>
<text x="685" y="260" font-size="10" fill="#ffffff" textLength="32" lengthAdjust="spacingAndGlyphs">1.13260</text>
<text x="685" y="293" font-size="10" fill="#ffffff" textLength="32" lengthAdjust="spacingAndGlyphs">1.13000</text>
<text x="682" y="305" font-size="10" fill="#ffffff" textLength="15" lengthAdjust="spacingAndGlyphs">100</text>
<text x="681" y="325" font-size="10" fill="#ffffff" textLength="10" lengthAdjust="spacingAndGlyphs">80</text>
<text x="681" y="400" font-size="10" fill="#ffffff" textLength="10" lengthAdjust="spacingAndGlyphs">20</text>
<text x="682" y="419" font-size="10" fill="#ffffff" textLength="6" lengthAdjust="spacingAndGlyphs">0</text>
<text x="682" y="434" font-size="10" fill="#ffffff" textLength="15" lengthAdjust="spacingAndGlyphs">120</text>
<text x="682" y="441" font-size="10" fill="#ffffff" textLength="14" lengthAdjust="spacingAndGlyphs">100</text>
<text x="681" y="452" font-size="10" fill="#ffffff" textLength="10" lengthAdjust="spacingAndGlyphs">80</text>
<text x="681" y="470" font-size="10" fill="#ffffff" textLength="10" lengthAdjust="spacingAndGlyphs">50</text>
<text x="682" y="498" font-size="10" fill="#ffffff" textLength="18" lengthAdjust="spacingAndGlyphs">0.00</text>
<text x="681" y="527" font-size="10" fill="#ffffff" textLength="14" lengthAdjust="spacingAndGlyphs">-50</text>
<text x="681" y="544" font-size="10" fill="#ffffff" textLength="14" lengthAdjust="spacingAndGlyphs">-80</text>
<text x="682" y="549" font-size="10" fill="#ffffff" textLength="18" lengthAdjust="spacingAndGlyphs">-100</text>
<text x="12" y="565" font-size="10" fill="#ffffff" textLength="50" lengthAdjust="spacingAndGlyphs">11 Jan 2022</text>
<text x="76" y="565" font-size="10" fill="#ffffff" textLength="52" lengthAdjust="spacingAndGlyphs">11 Jan 21:00</text>
<text x="140" y="565" font-size="10" fill="#ffffff" textLength="52" lengthAdjust="spacingAndGlyphs">12 Jan 05:00</text>
<text x="204" y="565" font-size="10" fill="#ffffff" textLength="52" lengthAdjust="spacingAndGlyphs">12 Jan 13:00</text>
<text x="268" y="565" font-size="10" fill="#ffffff" textLength="52" lengthAdjust="spacingAndGlyphs">12 Jan 21:00</text>
<text x="332" y="565" font-size="10" fill="#ffffff" textLength="52" lengthAdjust="spacingAndGlyphs">13 Jan 05:00</text>
<text x="396" y="565" font-size="10" fill="#ffffff" textLength="52" lengthAdjust="spacingAndGlyphs">13 Jan 13:00</text>
<text x="460" y="565" font-size="10" fill="#ffffff" textLength="52" lengthAdjust="spacingAndGlyphs">13 Jan 21:00</text>
<text x="524" y="565" font-size="10" fill="#ffffff" textLength="52" lengthAdjust="spacingAndGlyphs">14 Jan 05:00</text>
<text x="588" y="565" font-size="10" fill="#ffffff" textLength="52" lengthAdjust="spacingAndGlyphs">14 Jan 13:00</text>
<text x="652" y="565" font-size="10" fill="#ffffff" textLength="52" lengthAdjust="spacingAndGlyphs">14 Jan 21:00</text>
</svg></body></html>
